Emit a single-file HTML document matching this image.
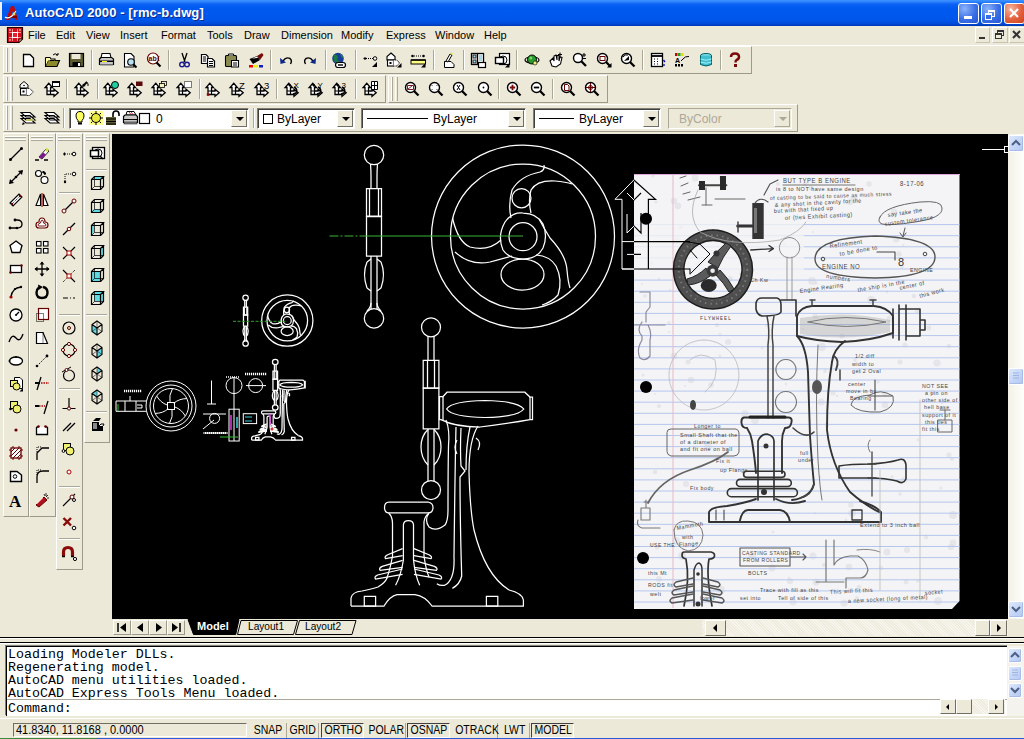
<!DOCTYPE html><html><head><meta charset="utf-8"><style>
*{margin:0;padding:0;box-sizing:border-box}
html,body{width:1024px;height:739px;overflow:hidden;background:#ece9d8;font-family:"Liberation Sans",sans-serif;font-size:11px;color:#000;position:relative}
.a{position:absolute}
svg{position:absolute;overflow:visible}
#title{left:0;top:0;width:1024px;height:26px;background:linear-gradient(#3d95ff 0,#2a80fa 2px,#0c62f4 4px,#005af0 8px,#0058ee 16px,#0054e8 21px,#0048d4 24px,#0038b0 26px)}
#title .t{left:25px;top:5px;color:#fff;font-weight:bold;font-size:13px;letter-spacing:0.1px;text-shadow:1px 1px #0b2a8a}
.wb{top:3px;width:21px;height:21px;border:1px solid #fff;border-radius:3px;background:radial-gradient(circle at 30% 25%,#8cb4fa,#3a6ee6 55%,#2456d0)}
.wbx{background:radial-gradient(circle at 30% 25%,#f5b4a0,#e4603c 55%,#cc4420)}
#menu{left:0;top:26px;width:1024px;height:20px;background:#ece9d8}
#menu span{position:absolute;top:3px}
.tb{position:absolute;background:#ece9d8;border-top:1px solid #fff;border-left:1px solid #fff;border-right:1px solid #9d9a8c;border-bottom:1px solid #9d9a8c}
.gv{position:absolute;top:2px;bottom:2px;width:2px;border-left:1px solid #fff;border-right:1px solid #aca899}
.gh{position:absolute;left:2px;right:2px;height:2px;border-top:1px solid #fff;border-bottom:1px solid #aca899}
.sv{position:absolute;width:2px;border-left:1px solid #aca899;border-right:1px solid #fff}
.sh{position:absolute;height:2px;border-top:1px solid #aca899;border-bottom:1px solid #fff}
.combo{position:absolute;background:#fff;border-top:1px solid #7f7d72;border-left:1px solid #7f7d72;border-bottom:1px solid #fff;border-right:1px solid #fff;box-shadow:inset 1px 1px 0 #404040}
.dd{position:absolute;top:1px;right:1px;width:16px;height:17px;background:#ece9d8;border-top:1px solid #fff;border-left:1px solid #fff;border-right:1px solid #716f64;border-bottom:1px solid #716f64}
.dd:after{content:"";position:absolute;left:4px;top:6px;border-left:4px solid transparent;border-right:4px solid transparent;border-top:4px solid #000}
.ct{position:absolute;top:3px;font-size:12px}
.dis:after{border-top-color:#aca899!important}
#cmd{font-family:"Liberation Mono",monospace;font-size:13.3px;line-height:13px}
.sb{position:absolute;top:724px;height:14px;font-size:12px;line-height:13px;padding-left:3px}
.sk{border:1px solid;border-color:#716f64 #fff #fff #716f64}
</style></head><body>
<div id="title" class="a"><div class="a t">AutoCAD 2000 - [rmc-b.dwg]</div><div class="a wb" style="left:958px"></div><div class="a wb" style="left:981px"></div><div class="a wb wbx" style="left:1004px"></div></div>
<svg style="left:4px;top:5px" width="16" height="16" viewBox="0 0 16 16"><path d="M2 15 L7 1 L10 1 L14 15 L11 15 L8.5 6 L6 15Z" fill="#c00a0a"/><path d="M4 11 L13 11 L13 13 L4 13Z" fill="#7a0000"/><path d="M1 12 Q4 14 8 11 L12 6" stroke="#fff" stroke-width="1.2" fill="none"/><circle cx="10" cy="9" r="1.4" fill="#ffd040"/></svg><div class="a" style="left:964px;top:16px;width:8px;height:3px;background:#fff"></div><div class="a" style="left:988px;top:10px;width:7px;height:7px;border:1px solid #fff;border-top-width:2px"></div><div class="a" style="left:985px;top:13px;width:7px;height:7px;border:1px solid #fff;border-top-width:2px;background:#3a6ee6"></div><svg style="left:1006px;top:5px" width="16" height="16" viewBox="0 0 16 16"><path d="M4 4 L12 12 M12 4 L4 12" stroke="#fff" stroke-width="2.2"/></svg>
<div class="a" style="left:0;top:2px;width:2px;height:18px;background:#f0f0f0"></div>
<div id="menu" class="a"><span style="left:28px">File</span><span style="left:56px">Edit</span><span style="left:86px">View</span><span style="left:120px">Insert</span><span style="left:161px">Format</span><span style="left:207px">Tools</span><span style="left:244px">Draw</span><span style="left:281px">Dimension</span><span style="left:341px">Modify</span><span style="left:386px">Express</span><span style="left:435px">Window</span><span style="left:484px">Help</span></div>
<div class="a" style="left:0;top:45px;width:1024px;height:1px;background:#fff"></div>
<svg style="left:7px;top:27px" width="16" height="16" viewBox="0 0 16 16"><path d="M0.5 0.5 H15.5 V12 L12 15.5 H0.5Z" fill="#d0101a" stroke="#200" stroke-width="1.2"/><path d="M2 5.5 H14 M2 10.5 H14 M5.5 2 V14 M10.5 2 V14" stroke="#ff9090" stroke-width="1"/><rect x="5.5" y="5.5" width="5" height="5" fill="#e82030" stroke="#fff" stroke-width="1"/><circle cx="3" cy="3" r="0.8" fill="#fff"/><circle cx="13" cy="3" r="0.8" fill="#fff"/><circle cx="3" cy="13" r="0.8" fill="#fff"/><path d="M12 15.5 L15.5 12 H12Z" fill="#ccc" stroke="#200" stroke-width="0.8"/></svg><div class="a" style="left:975px;top:27px;width:15px;height:16px;border:1px solid;border-color:#fff #c8c4b4 #c8c4b4 #fff"></div><div class="a" style="left:992px;top:27px;width:16px;height:16px;border:1px solid;border-color:#fff #c8c4b4 #c8c4b4 #fff"></div><div class="a" style="left:1009px;top:27px;width:16px;height:16px;border:1px solid;border-color:#fff #c8c4b4 #c8c4b4 #fff"></div><div class="a" style="left:979px;top:37px;width:6px;height:2px;background:#333"></div><div class="a" style="left:997px;top:30px;width:7px;height:6px;border:1px solid #333;border-top-width:2px"></div><div class="a" style="left:995px;top:33px;width:7px;height:6px;border:1px solid #333;border-top-width:2px;background:#ece9d8"></div><svg style="left:1009px;top:27px" width="16" height="16" viewBox="0 0 16 16"><path d="M4 4 L11 11 M11 4 L4 11" stroke="#333" stroke-width="2"/></svg>
<div class="tb" style="left:3px;top:46px;width:749px;height:28px"></div>
<div class="a" style="left:6px;top:48px;width:2px;height:24px;border-left:1px solid #fff;border-right:1px solid #aca899"></div><div class="a" style="left:10px;top:48px;width:3px;height:24px;border-left:1px solid #fff;border-right:1px solid #aca899"></div>
<div class="sv" style="left:91px;top:50px;height:20px"></div>
<div class="sv" style="left:168px;top:50px;height:20px"></div>
<div class="sv" style="left:270px;top:50px;height:20px"></div>
<div class="sv" style="left:325px;top:50px;height:20px"></div>
<div class="sv" style="left:355px;top:50px;height:20px"></div>
<div class="sv" style="left:433px;top:50px;height:20px"></div>
<div class="sv" style="left:463px;top:50px;height:20px"></div>
<div class="sv" style="left:516px;top:50px;height:20px"></div>
<div class="sv" style="left:642px;top:50px;height:20px"></div>
<div class="sv" style="left:720px;top:50px;height:20px"></div>
<div class="tb" style="left:3px;top:75px;width:383px;height:28px"></div>
<div class="a" style="left:6px;top:77px;width:2px;height:24px;border-left:1px solid #fff;border-right:1px solid #aca899"></div><div class="a" style="left:10px;top:77px;width:3px;height:24px;border-left:1px solid #fff;border-right:1px solid #aca899"></div>
<div class="sv" style="left:66px;top:79px;height:20px"></div>
<div class="sv" style="left:97px;top:79px;height:20px"></div>
<div class="sv" style="left:199px;top:79px;height:20px"></div>
<div class="sv" style="left:276px;top:79px;height:20px"></div>
<div class="sv" style="left:355px;top:79px;height:20px"></div>
<div class="tb" style="left:388px;top:75px;width:220px;height:28px"></div>
<div class="a" style="left:391px;top:77px;width:2px;height:24px;border-left:1px solid #fff;border-right:1px solid #aca899"></div><div class="a" style="left:395px;top:77px;width:3px;height:24px;border-left:1px solid #fff;border-right:1px solid #aca899"></div>
<div class="sv" style="left:498px;top:79px;height:20px"></div>
<div class="sv" style="left:552px;top:79px;height:20px"></div>
<div class="tb" style="left:3px;top:104px;width:795px;height:28px"></div>
<div class="a" style="left:6px;top:106px;width:2px;height:24px;border-left:1px solid #fff;border-right:1px solid #aca899"></div><div class="a" style="left:10px;top:106px;width:3px;height:24px;border-left:1px solid #fff;border-right:1px solid #aca899"></div>
<div class="sv" style="left:63px;top:108px;height:20px"></div>
<div class="sv" style="left:253px;top:108px;height:20px"></div>
<div class="combo" style="left:69px;top:108px;width:180px;height:21px;background:#fff"><span class="ct" style="left:86px">0</span><div class="dd"></div></div>
<div class="combo" style="left:257px;top:108px;width:98px;height:21px;background:#fff"><div class="a" style="left:5px;top:5px;width:10px;height:10px;border:1px solid #000"></div><span class="ct" style="left:19px">ByLayer</span><div class="dd"></div></div>
<div class="combo" style="left:361px;top:108px;width:165px;height:21px;background:#fff"><div class="a" style="left:5px;top:9px;width:61px;height:1px;background:#000"></div><span class="ct" style="left:71px">ByLayer</span><div class="dd"></div></div>
<div class="combo" style="left:533px;top:108px;width:128px;height:21px;background:#fff"><div class="a" style="left:5px;top:9px;width:35px;height:1px;background:#000"></div><span class="ct" style="left:45px">ByLayer</span><div class="dd"></div></div>
<div class="combo" style="left:668px;top:108px;width:124px;height:21px;background:#ece9d8;box-shadow:none;border-color:#aca899 #fff #fff #aca899"><span class="ct" style="left:10px;color:#aca899">ByColor</span><div class="dd dis" style="border-color:#fff #aca899 #aca899 #fff"></div></div>
<style>.combo:last-of-type .dd:after{}</style>
<div class="tb" style="left:3px;top:133px;width:26px;height:384px"></div>
<div class="gh" style="left:5px;top:136px;width:21px"></div><div class="gh" style="left:5px;top:139px;width:21px"></div>
<div class="tb" style="left:29px;top:133px;width:27px;height:384px"></div>
<div class="gh" style="left:31px;top:136px;width:22px"></div><div class="gh" style="left:31px;top:139px;width:22px"></div>
<div class="tb" style="left:56px;top:133px;width:27px;height:437px"></div>
<div class="gh" style="left:58px;top:136px;width:22px"></div><div class="gh" style="left:58px;top:139px;width:22px"></div>
<div class="tb" style="left:84px;top:133px;width:26px;height:310px"></div>
<div class="gh" style="left:86px;top:136px;width:21px"></div><div class="gh" style="left:86px;top:139px;width:21px"></div>
<svg style="left:20px;top:52px" width="16" height="16" viewBox="0 0 16 16"><path d="M3.5 2.5 H10 L13.5 6 V14.5 H3.5Z" fill="#fff" stroke="#000" stroke-width="1.3"/></svg><svg style="left:44px;top:52px" width="16" height="16" viewBox="0 0 16 16"><path d="M1.5 5.5 V14.5 H13 L15.5 8.5 H4 L1.5 14" fill="#8c8a2c" stroke="#000" stroke-width="1.1"/><path d="M1.5 5.5 H6 L7 7 H11 V8.5" fill="#f0f090" stroke="#000" stroke-width="1.1"/><path d="M2 6 H6 V8.5 H4 L2 13Z" fill="#ffffa0"/><path d="M9 3 Q11 0.5 13.5 3 M12 3 H14 V1" stroke="#000" stroke-width="1" fill="none"/></svg><svg style="left:68px;top:52px" width="16" height="16" viewBox="0 0 16 16"><rect x="1.5" y="1.5" width="14" height="13" fill="#5e5c30" stroke="#000" stroke-width="1.2"/><rect x="3.5" y="2" width="9" height="5" fill="#ece9d8"/><rect x="4.5" y="10" width="8" height="4.5" fill="#000"/><rect x="10" y="11" width="2" height="3" fill="#fff"/></svg><svg style="left:98px;top:52px" width="16" height="16" viewBox="0 0 16 16"><path d="M4 1.5 H12 L13 6 H3Z" fill="#fff" stroke="#000" stroke-width="1.1"/><path d="M1.5 7 L3 5.5 H13.5 L15.5 7 V12.5 H1.5Z" fill="#c8c8c8" stroke="#000" stroke-width="1.2"/><rect x="2" y="8.5" width="13" height="1.5" fill="#000"/><rect x="4" y="9" width="5" height="1" fill="#ff0"/><rect x="2" y="12" width="13" height="1.5" fill="#707070"/></svg><svg style="left:122px;top:52px" width="16" height="16" viewBox="0 0 16 16"><path d="M2.5 1.5 H9 L12 4.5 V15 H2.5Z" fill="#fff" stroke="#000" stroke-width="1.1"/><circle cx="9" cy="10" r="3.3" fill="#b8e0f0" stroke="#000" stroke-width="1.1"/><path d="M11.3 12.3 L14.5 15.5" stroke="#000" stroke-width="2"/></svg><svg style="left:146px;top:52px" width="16" height="16" viewBox="0 0 16 16"><circle cx="7" cy="6.5" r="5.5" fill="#fff" stroke="#600" stroke-width="1.2"/><text x="2.5" y="9" font-size="7" font-weight="bold" fill="#600" font-family="Liberation Sans">ab</text><path d="M13 4 Q11 6.5 13 9" stroke="#600" fill="none"/><path d="M10.5 10.5 L14.5 14.5" stroke="#000" stroke-width="2.2"/></svg><svg style="left:176px;top:52px" width="16" height="16" viewBox="0 0 16 16"><path d="M6 1 L9 10 M11 1 L8 10" stroke="#000" stroke-width="1.3"/><circle cx="6" cy="12.5" r="2.3" fill="none" stroke="#1b1b8c" stroke-width="1.4"/><circle cx="11" cy="12.5" r="2.3" fill="none" stroke="#1b1b8c" stroke-width="1.4"/></svg><svg style="left:200px;top:52px" width="16" height="16" viewBox="0 0 16 16"><path d="M1.5 2.5 H6 L8 4.5 V11.5 H1.5Z" fill="#fff" stroke="#000" stroke-width="1.2"/><path d="M3 5 H6 M3 7 H6 M3 9 H6" stroke="#000"/><path d="M7.5 6.5 H12 L14.5 9 V15 H7.5Z" fill="#fff" stroke="#000" stroke-width="1.2"/><path d="M9 9.5 H13 M9 11.5 H13 M9 13.5 H13" stroke="#000"/></svg><svg style="left:224px;top:52px" width="16" height="16" viewBox="0 0 16 16"><rect x="1.5" y="3.5" width="11" height="11" rx="1" fill="#8a8a50" stroke="#000" stroke-width="1.1"/><path d="M4.5 3.5 V2 H9.5 V3.5" fill="#fff" stroke="#000"/><path d="M7.5 8.5 H14.5 V15 H7.5Z" fill="#fff" stroke="#000" stroke-width="1.1"/><path d="M9 11 H13 M9 13 H13" stroke="#000"/></svg><svg style="left:248px;top:52px" width="16" height="16" viewBox="0 0 16 16"><path d="M1.5 7 L9 4 L12 8 L5 12Z" fill="#000"/><path d="M4 6.5 L9 4.5 L10 6Z" fill="#fff"/><path d="M9 4 L14 1 L15.5 3 L12 8Z" fill="#7a0a0a"/><rect x="1" y="13" width="4" height="2.5" fill="#e00"/><rect x="6" y="13" width="4" height="2.5" fill="#ee0"/><rect x="11" y="13" width="4" height="2.5" fill="#1020c0"/></svg><svg style="left:278px;top:52px" width="16" height="16" viewBox="0 0 16 16"><path d="M5 9 Q8 4.5 12 6.5 Q14.5 8.5 12.5 12" stroke="#000" stroke-width="1.4" fill="none"/><path d="M2 6 L2.5 12 L8 10.5Z" fill="#0a2a8a"/></svg><svg style="left:302px;top:52px" width="16" height="16" viewBox="0 0 16 16"><path d="M11 9 Q8 4.5 4 6.5 Q1.5 8.5 3.5 12" stroke="#000" stroke-width="1.4" fill="none"/><path d="M14 6 L13.5 12 L8 10.5Z" fill="#0a2a8a"/></svg><svg style="left:331px;top:52px" width="16" height="16" viewBox="0 0 16 16"><circle cx="7" cy="6.5" r="5.8" fill="#1a3c9c"/><path d="M3 3 Q6 2 7 5 Q5 8 8 9 Q10 11 6 12 Q3 10 2.5 7Z" fill="#1c7c3c"/><path d="M9 2 Q12 3 12 6 Q10 5 9 2" fill="#2a8a4a"/><rect x="4.5" y="10.5" width="10" height="5" rx="2.5" fill="#fff" stroke="#000" stroke-width="1.2"/><rect x="7" y="12.3" width="5" height="1.4" fill="#000"/></svg><svg style="left:362px;top:52px" width="16" height="16" viewBox="0 0 16 16"><path d="M1.5 6.5 H5" stroke="#000" stroke-width="1.2"/><path d="M3 5 V8" stroke="#000"/><path d="M6 6.5 H11" stroke="#000" stroke-dasharray="1 1"/><circle cx="13" cy="6.5" r="1.8" fill="#fff" stroke="#000"/><path d="M15 10 V15 H10Z" fill="#000"/></svg><svg style="left:386px;top:52px" width="16" height="16" viewBox="0 0 16 16"><path d="M5 1 L9 4.5 V8 H1 V4.5Z" fill="#fff" stroke="#000" stroke-width="1.1"/><rect x="1.5" y="8" width="6" height="6" fill="#fff" stroke="#000" stroke-width="1.1"/><rect x="3.5" y="10" width="2" height="2" fill="#000"/><path d="M7.5 8 L11 8 L13.5 11 L11 14 L7.5 14" fill="#fff" stroke="#000" stroke-width="1" stroke-dasharray="1 0.6"/><path d="M15.5 11 V15.5 H11Z" fill="#000"/></svg><svg style="left:410px;top:52px" width="16" height="16" viewBox="0 0 16 16"><circle cx="2.5" cy="4" r="1.3" fill="#000"/><circle cx="13.5" cy="4" r="1.3" fill="#000"/><path d="M4 4 H12" stroke="#000" stroke-dasharray="1 1"/><rect x="1" y="8" width="14.5" height="4" fill="#ffff80" stroke="#000" stroke-width="1"/><path d="M1 8 H15.5" stroke="#000" stroke-width="1.5"/><path d="M15.5 11 V15.5 H11Z" fill="#000"/></svg><svg style="left:441px;top:52px" width="16" height="16" viewBox="0 0 16 16"><path d="M3.5 9.5 H10 L13 12.5 V15.5 H3.5Z" fill="#fff" stroke="#000"/><path d="M5 9 L9 2 L11 3 L7 10Z" fill="#fff" stroke="#000" stroke-width="1"/><path d="M9 2 L10.5 0.5 L12 1.5 L11 3Z" fill="#e0e040"/></svg><svg style="left:470px;top:52px" width="16" height="16" viewBox="0 0 16 16"><rect x="1.5" y="1.5" width="12" height="11" fill="#fff" stroke="#000" stroke-width="1.3"/><path d="M7.5 1.5 V12.5" stroke="#000" stroke-width="1.3"/><rect x="3" y="3" width="3" height="3" fill="#a0d8e8" stroke="#000" stroke-width="0.8"/><rect x="3" y="8" width="3" height="3" fill="#a0d8e8" stroke="#000" stroke-width="0.8"/><rect x="9" y="3" width="3" height="6" fill="#a0d8e8"/><rect x="8.5" y="10.5" width="7" height="5" fill="#fff" stroke="#000" stroke-width="1.2"/></svg><svg style="left:494px;top:52px" width="16" height="16" viewBox="0 0 16 16"><rect x="5.5" y="1.5" width="10" height="11" fill="#fff" stroke="#000" stroke-width="1.2"/><circle cx="9" cy="8" r="4" fill="#fff" stroke="#000"/><rect x="1.5" y="5.5" width="8" height="6" fill="#fff" stroke="#000" stroke-width="1.4"/><path d="M15.5 11 V15.5 H11Z" fill="#000"/></svg><svg style="left:524px;top:52px" width="16" height="16" viewBox="0 0 16 16"><ellipse cx="8" cy="8" rx="7" ry="3" fill="none" stroke="#000" stroke-width="1.2"/><circle cx="8" cy="7.5" r="4.5" fill="#2a9a2a" stroke="#000"/><circle cx="6.8" cy="6" r="1.5" fill="#6ad86a"/><circle cx="11" cy="11" r="2" fill="#f0f080" stroke="#000" stroke-width="0.6"/></svg><svg style="left:548px;top:52px" width="16" height="16" viewBox="0 0 16 16"><path d="M2 9 L5 6 L6 9 L6 4 L8 3 L9 8 L9 3.5 L11 3.5 L11 9 L12 5 L14 5.5 L12.5 12 L8 15 L4 14 Z" fill="#fff" stroke="#000" stroke-width="1.1"/><path d="M12 0.5 V5 M10 2.5 H14" stroke="#000"/></svg><svg style="left:572px;top:52px" width="16" height="16" viewBox="0 0 16 16"><circle cx="6" cy="6" r="4.5" fill="#fff" stroke="#000" stroke-width="1.4"/><path d="M9.3 9.3 L14 14" stroke="#000" stroke-width="2.3"/><path d="M12 1 V5 M10 3 H14 M10 6.5 H14" stroke="#000"/></svg><svg style="left:596px;top:52px" width="16" height="16" viewBox="0 0 16 16"><circle cx="6.5" cy="6.5" r="5" fill="#fff" stroke="#000" stroke-width="1.4"/><path d="M10 10 L14.5 14.5" stroke="#000" stroke-width="2.3"/><rect x="4" y="4.5" width="5" height="4" fill="none" stroke="#600"/><path d="M15.5 11 V15.5 H11Z" fill="#000"/></svg><svg style="left:620px;top:52px" width="16" height="16" viewBox="0 0 16 16"><circle cx="6.5" cy="6.5" r="5" fill="#fff" stroke="#000" stroke-width="1.4"/><path d="M10 10 L14.5 14.5" stroke="#000" stroke-width="2.3"/><path d="M4 9 L9 4 L9 8Z" fill="#000"/><path d="M3 5 Q5 2 8 3" stroke="#000" fill="none"/></svg><svg style="left:650px;top:52px" width="16" height="16" viewBox="0 0 16 16"><rect x="1.5" y="1.5" width="11" height="13" fill="#fff" stroke="#000" stroke-width="1.3"/><path d="M1.5 4 H12.5" stroke="#000" stroke-width="1.8"/><path d="M4 7 H5 M7 7 H8 M4 9.5 H5 M7 9.5 H8 M4 12 H5 M7 12 H8" stroke="#000" stroke-width="1.2"/><path d="M13.5 8 L15 10 M14 12 V14" stroke="#1010c0" stroke-width="1.3"/></svg><svg style="left:674px;top:52px" width="16" height="16" viewBox="0 0 16 16"><rect x="1" y="1" width="2.5" height="3" fill="#c00"/><rect x="4" y="1" width="2.5" height="3" fill="#20a020"/><rect x="7" y="1" width="2.5" height="3" fill="#e0e000"/><path d="M9 7 Q11 4 15 4.5" stroke="#000" fill="none"/><path d="M7 9 L9 7" stroke="#000"/><text x="1" y="11" font-size="7" font-weight="bold" font-family="Liberation Sans">A</text><rect x="1" y="12" width="2" height="2.5" fill="#000"/><rect x="4" y="12" width="2" height="2.5" fill="#000"/><rect x="7" y="12" width="2" height="2.5" fill="#000"/></svg><svg style="left:698px;top:52px" width="16" height="16" viewBox="0 0 16 16"><ellipse cx="8" cy="3.5" rx="5.5" ry="2" fill="#80e0e8" stroke="#006060"/><path d="M2.5 3.5 V12.5 Q8 15.5 13.5 12.5 V3.5" fill="#40c0d0" stroke="#006060"/><path d="M2.5 7 Q8 9.5 13.5 7 M2.5 10 Q8 12.5 13.5 10" stroke="#a0f0f8" fill="none"/></svg><svg style="left:727px;top:52px" width="16" height="16" viewBox="0 0 16 16"><path d="M4 5 Q4 1.5 8 1.5 Q12 1.5 12 5 Q12 7 9.5 8 Q8.5 8.5 8.5 10.5" stroke="#7a0a0a" stroke-width="2.5" fill="none"/><rect x="7" y="12" width="3" height="3" fill="#7a0a0a"/></svg><svg style="left:19px;top:81px" width="16" height="16" viewBox="0 0 16 16"><path d="M5 0.5 L9 4 V7 H1 V4Z" fill="#fff" stroke="#000"/><circle cx="5" cy="4.5" r="0.8" fill="#000"/><rect x="1.5" y="7.5" width="6" height="6.5" fill="#fff" stroke="#000" stroke-width="1.1"/><rect x="3.5" y="9.5" width="2" height="2" fill="#000"/><path d="M7.5 7.5 H10.5 L14.5 11 L10.5 14.5 H7.5" fill="#fff" stroke="#000" stroke-dasharray="1 0.7"/></svg><svg style="left:44px;top:81px" width="16" height="16" viewBox="0 0 16 16"><path d="M4.75 2.3 L8.4 6.5 H6.5 V10 H10 V8.2 L14.2 11.75 L10 15.3 V13.5 H3 V6.5 H1.1 Z" fill="#fff" stroke="#000" stroke-width="1.3" stroke-linejoin="miter"/><path d="M3 10 H6.5 V13.5" stroke="#000" stroke-width="1.2" fill="none"/><rect x="8.5" y="0.5" width="7" height="5" fill="#fff" stroke="#000"/><rect x="8.5" y="0.5" width="7" height="1.5" fill="#000"/></svg><svg style="left:74px;top:81px" width="16" height="16" viewBox="0 0 16 16"><path d="M4.75 2.3 L8.4 6.5 H6.5 V10 H10 V8.2 L14.2 11.75 L10 15.3 V13.5 H3 V6.5 H1.1 Z" fill="#fff" stroke="#000" stroke-width="1.3" stroke-linejoin="miter"/><path d="M3 10 H6.5 V13.5" stroke="#000" stroke-width="1.2" fill="none"/><path d="M9 5 L13 1" stroke="#000" stroke-width="2"/><path d="M8 6 L9 2.5 L11.5 5Z" fill="#000"/><path d="M12 1 Q15 2 14 5" stroke="#000" fill="none"/></svg><svg style="left:103px;top:81px" width="16" height="16" viewBox="0 0 16 16"><path d="M4.75 2.3 L8.4 6.5 H6.5 V10 H10 V8.2 L14.2 11.75 L10 15.3 V13.5 H3 V6.5 H1.1 Z" fill="#fff" stroke="#000" stroke-width="1.3" stroke-linejoin="miter"/><path d="M3 10 H6.5 V13.5" stroke="#000" stroke-width="1.2" fill="none"/><circle cx="12" cy="4" r="3.5" fill="#20d0a0" stroke="#000"/></svg><svg style="left:127px;top:81px" width="16" height="16" viewBox="0 0 16 16"><path d="M4.75 2.3 L8.4 6.5 H6.5 V10 H10 V8.2 L14.2 11.75 L10 15.3 V13.5 H3 V6.5 H1.1 Z" fill="#fff" stroke="#000" stroke-width="1.3" stroke-linejoin="miter"/><path d="M3 10 H6.5 V13.5" stroke="#000" stroke-width="1.2" fill="none"/><rect x="9" y="0.5" width="6.5" height="4.5" fill="#5a0a0a"/></svg><svg style="left:151px;top:81px" width="16" height="16" viewBox="0 0 16 16"><path d="M4.75 2.3 L8.4 6.5 H6.5 V10 H10 V8.2 L14.2 11.75 L10 15.3 V13.5 H3 V6.5 H1.1 Z" fill="#fff" stroke="#000" stroke-width="1.3" stroke-linejoin="miter"/><path d="M3 10 H6.5 V13.5" stroke="#000" stroke-width="1.2" fill="none"/><rect x="10.5" y="0.5" width="5" height="4" fill="#f0f0c0" stroke="#000" stroke-width="0.8"/><rect x="8.5" y="2.5" width="5" height="4" fill="#f0f0c0" stroke="#000" stroke-width="0.8"/></svg><svg style="left:176px;top:81px" width="16" height="16" viewBox="0 0 16 16"><path d="M4.75 2.3 L8.4 6.5 H6.5 V10 H10 V8.2 L14.2 11.75 L10 15.3 V13.5 H3 V6.5 H1.1 Z" fill="#fff" stroke="#000" stroke-width="1.3" stroke-linejoin="miter"/><path d="M3 10 H6.5 V13.5" stroke="#000" stroke-width="1.2" fill="none"/><rect x="8.5" y="0.5" width="7" height="6" fill="#fff" stroke="#000" stroke-dasharray="1 1"/></svg><svg style="left:205px;top:81px" width="16" height="16" viewBox="0 0 16 16"><path d="M4.75 2.3 L8.4 6.5 H6.5 V10 H10 V8.2 L14.2 11.75 L10 15.3 V13.5 H3 V6.5 H1.1 Z" fill="#fff" stroke="#000" stroke-width="1.3" stroke-linejoin="miter"/><path d="M3 10 H6.5 V13.5" stroke="#000" stroke-width="1.2" fill="none"/><rect x="1.8" y="12.2" width="2.6" height="2.6" fill="#8a0a0a"/></svg><svg style="left:229px;top:81px" width="16" height="16" viewBox="0 0 16 16"><path d="M4.75 2.3 L8.4 6.5 H6.5 V10 H10 V8.2 L14.2 11.75 L10 15.3 V13.5 H3 V6.5 H1.1 Z" fill="#fff" stroke="#000" stroke-width="1.3" stroke-linejoin="miter"/><path d="M3 10 H6.5 V13.5" stroke="#000" stroke-width="1.2" fill="none"/><text x="10" y="8" font-size="9.5" font-family="Liberation Sans">Z</text></svg><svg style="left:254px;top:81px" width="16" height="16" viewBox="0 0 16 16"><path d="M4.75 2.3 L8.4 6.5 H6.5 V10 H10 V8.2 L14.2 11.75 L10 15.3 V13.5 H3 V6.5 H1.1 Z" fill="#fff" stroke="#000" stroke-width="1.3" stroke-linejoin="miter"/><path d="M3 10 H6.5 V13.5" stroke="#000" stroke-width="1.2" fill="none"/><text x="10" y="8" font-size="9.5" font-family="Liberation Sans">3</text></svg><svg style="left:284px;top:81px" width="16" height="16" viewBox="0 0 16 16"><path d="M4.75 2.3 L8.4 6.5 H6.5 V10 H10 V8.2 L14.2 11.75 L10 15.3 V13.5 H3 V6.5 H1.1 Z" fill="#fff" stroke="#000" stroke-width="1.3" stroke-linejoin="miter"/><path d="M3 10 H6.5 V13.5" stroke="#000" stroke-width="1.2" fill="none"/><path d="M3 3 L6.5 3 L6.5 6.5Z" fill="#000"/><path d="M10 6 Q14 8 12 12 L9 13" stroke="#000" stroke-width="1.6" fill="none"/><text x="9.5" y="7" font-size="8" font-family="Liberation Sans">X</text></svg><svg style="left:308px;top:81px" width="16" height="16" viewBox="0 0 16 16"><path d="M4.75 2.3 L8.4 6.5 H6.5 V10 H10 V8.2 L14.2 11.75 L10 15.3 V13.5 H3 V6.5 H1.1 Z" fill="#fff" stroke="#000" stroke-width="1.3" stroke-linejoin="miter"/><path d="M3 10 H6.5 V13.5" stroke="#000" stroke-width="1.2" fill="none"/><path d="M3 3 L6.5 3 L6.5 6.5Z" fill="#000"/><path d="M10 6 Q14 8 12 12 L9 13" stroke="#000" stroke-width="1.6" fill="none"/><text x="9.5" y="7" font-size="8" font-family="Liberation Sans">Y</text></svg><svg style="left:332px;top:81px" width="16" height="16" viewBox="0 0 16 16"><path d="M4.75 2.3 L8.4 6.5 H6.5 V10 H10 V8.2 L14.2 11.75 L10 15.3 V13.5 H3 V6.5 H1.1 Z" fill="#fff" stroke="#000" stroke-width="1.3" stroke-linejoin="miter"/><path d="M3 10 H6.5 V13.5" stroke="#000" stroke-width="1.2" fill="none"/><path d="M3 3 L6.5 3 L6.5 6.5Z" fill="#000"/><path d="M10 6 Q14 8 12 12 L9 13" stroke="#000" stroke-width="1.6" fill="none"/><text x="9.5" y="7" font-size="8" font-family="Liberation Sans">3</text></svg><svg style="left:362px;top:81px" width="16" height="16" viewBox="0 0 16 16"><path d="M4.75 2.3 L8.4 6.5 H6.5 V10 H10 V8.2 L14.2 11.75 L10 15.3 V13.5 H3 V6.5 H1.1 Z" fill="#fff" stroke="#000" stroke-width="1.3" stroke-linejoin="miter"/><path d="M3 10 H6.5 V13.5" stroke="#000" stroke-width="1.2" fill="none"/><path d="M9.5 0.5 H15.5 V8.5 H9.5Z M9.5 4.5 H15.5 M12.5 0.5 V8.5" fill="#fff" stroke="#000"/></svg><svg style="left:404px;top:81px" width="16" height="16" viewBox="0 0 16 16"><circle cx="6.5" cy="6.5" r="5" fill="#fff" stroke="#000" stroke-width="1.4"/><path d="M10 10 L14.5 14.5" stroke="#000" stroke-width="2.3"/><path d="M3.5 8.5 V4.5 H9.5 V8.5 Z" fill="none" stroke="#600" stroke-width="0.9"/><path d="M4 8 L8 5" stroke="#600" stroke-width="0.8"/></svg><svg style="left:428px;top:81px" width="16" height="16" viewBox="0 0 16 16"><circle cx="6.5" cy="6.5" r="5" fill="#fff" stroke="#000" stroke-width="1.4"/><path d="M10 10 L14.5 14.5" stroke="#000" stroke-width="2.3"/><path d="M4.5 4 L3.8 4.8 M8.5 4 L9.2 4.8 M3.8 8.2 L4.5 9 M9.2 8.2 L8.5 9" stroke="#000" stroke-width="0.9" fill="none"/></svg><svg style="left:452px;top:81px" width="16" height="16" viewBox="0 0 16 16"><circle cx="6.5" cy="6.5" r="5" fill="#fff" stroke="#000" stroke-width="1.4"/><path d="M10 10 L14.5 14.5" stroke="#000" stroke-width="2.3"/><path d="M5 4 L8 9 M8 4 L5 9" stroke="#000"/></svg><svg style="left:477px;top:81px" width="16" height="16" viewBox="0 0 16 16"><circle cx="6.5" cy="6.5" r="5" fill="#fff" stroke="#000" stroke-width="1.4"/><path d="M10 10 L14.5 14.5" stroke="#000" stroke-width="2.3"/><circle cx="6.5" cy="6.5" r="0.9" fill="#000"/></svg><svg style="left:506px;top:81px" width="16" height="16" viewBox="0 0 16 16"><circle cx="6.5" cy="6.5" r="5" fill="#fff" stroke="#000" stroke-width="1.4"/><path d="M10 10 L14.5 14.5" stroke="#000" stroke-width="2.3"/><path d="M3.8 6.5 H9.2 M6.5 3.8 V9.2" stroke="#7a0a0a" stroke-width="1.8"/></svg><svg style="left:530px;top:81px" width="16" height="16" viewBox="0 0 16 16"><circle cx="6.5" cy="6.5" r="5" fill="#fff" stroke="#000" stroke-width="1.4"/><path d="M10 10 L14.5 14.5" stroke="#000" stroke-width="2.3"/><path d="M3.8 6.5 H9.2" stroke="#000" stroke-width="1.8"/></svg><svg style="left:560px;top:81px" width="16" height="16" viewBox="0 0 16 16"><circle cx="6.5" cy="6.5" r="5" fill="#fff" stroke="#000" stroke-width="1.4"/><path d="M10 10 L14.5 14.5" stroke="#000" stroke-width="2.3"/><path d="M4.5 3.5 H7.5 L9 5 V9.5 H4.5Z" fill="#fff" stroke="#600"/></svg><svg style="left:584px;top:81px" width="16" height="16" viewBox="0 0 16 16"><circle cx="6.5" cy="6.5" r="5" fill="#fff" stroke="#000" stroke-width="1.4"/><path d="M10 10 L14.5 14.5" stroke="#000" stroke-width="2.3"/><path d="M2 6.5 H11 M6.5 2 V11" stroke="#600"/><circle cx="6.5" cy="6.5" r="2" fill="none" stroke="#600"/></svg><svg style="left:20px;top:110px" width="16" height="16" viewBox="0 0 16 16"><path d="M1 2.5 H10 L15 7 H6Z M1 5.5 H10 L15 10 H6Z M1 8.5 H10 L15 13 H6Z" fill="#fff" stroke="#000" stroke-width="1.1"/><path d="M6 10 H14" stroke="#e0e060" stroke-width="1.5"/><path d="M2 15 L3 12 L5 14Z" fill="#000"/></svg><svg style="left:44px;top:110px" width="16" height="16" viewBox="0 0 16 16"><path d="M1 2.5 H10 L15 7 H6Z M1 5.5 H10 L15 10 H6Z M1 8.5 H10 L15 13 H6Z" fill="#fff" stroke="#000" stroke-width="1.1"/></svg><svg style="left:72px;top:110px" width="16" height="16" viewBox="0 0 16 16"><path d="M4 6 Q4 1.5 8 1.5 Q12 1.5 12 6 Q12 8.5 10 10.5 V12 H6 V10.5 Q4 8.5 4 6Z" fill="#ffff60" stroke="#000"/><rect x="6" y="12.5" width="4" height="2" fill="#000"/></svg><svg style="left:88px;top:110px" width="16" height="16" viewBox="0 0 16 16"><rect x="1" y="1" width="14" height="14" fill="#ffff90"/><circle cx="8" cy="8" r="4.5" fill="#e8e840" stroke="#000"/><path d="M8 1 V3 M8 13 V15 M1 8 H3 M13 8 H15 M3 3 L4.5 4.5 M13 3 L11.5 4.5 M3 13 L4.5 11.5 M13 13 L11.5 11.5" stroke="#000"/></svg><svg style="left:105px;top:110px" width="16" height="16" viewBox="0 0 16 16"><path d="M8 7 V4 Q8 1 11 1 Q14 1 14 4 V6" stroke="#000" stroke-width="1.6" fill="none"/><rect x="1" y="7" width="10" height="8" fill="#5e5c30"/><path d="M1 9 H11 M1 11.5 H11 M1 14 H11" stroke="#000" stroke-width="1"/></svg><svg style="left:122px;top:110px" width="16" height="16" viewBox="0 0 16 16"><path d="M5 1.5 H12 L14 5 H4Z" fill="#fff" stroke="#000"/><path d="M7 2 L9 4.5 M9 2 L11 4.5" stroke="#c00" stroke-width="0.8"/><path d="M1.5 6.5 L3 5 H14 L15.5 6.5 V12.5 H1.5Z" fill="#c8c8c8" stroke="#000" stroke-width="1.2"/><path d="M2 9.5 H15" stroke="#000"/><rect x="2" y="12" width="13" height="2" fill="#888" stroke="#000" stroke-width="0.5"/></svg><svg style="left:136px;top:110px" width="16" height="16" viewBox="0 0 16 16"><rect x="3.5" y="3.5" width="10" height="10" fill="#fff" stroke="#000" stroke-width="1.2"/></svg><svg style="left:8px;top:146px" width="16" height="16" viewBox="0 0 16 16"><path d="M2.5 13.5 L13.5 2.5" stroke="#000" stroke-width="1.2"/><circle cx="2.5" cy="13.5" r="1.5" fill="#000"/><circle cx="13.5" cy="2.5" r="1.5" fill="#000"/></svg><svg style="left:8px;top:169px" width="16" height="16" viewBox="0 0 16 16"><path d="M2 14 L14 2" stroke="#000" stroke-width="1.2"/><path d="M1 15 L2 10 L6 14Z M15 1 L14 6 L10 2Z" fill="#000"/><circle cx="8" cy="8" r="1.3" fill="#000"/></svg><svg style="left:8px;top:192px" width="16" height="16" viewBox="0 0 16 16"><path d="M2 11 L11 2 L14 5 L5 14Z" fill="#fff" stroke="#000" stroke-width="1.1"/><path d="M4 12 L12 4" stroke="#000" stroke-dasharray="1 1"/><circle cx="4" cy="12" r="1.2" fill="#600"/><circle cx="12" cy="4" r="1.2" fill="#600"/></svg><svg style="left:8px;top:216px" width="16" height="16" viewBox="0 0 16 16"><path d="M2 12 H9 Q14 12 14 8 Q14 4 9 4 H7" stroke="#000" stroke-width="1.3" fill="none"/><circle cx="2" cy="12" r="1.4" fill="#000"/><circle cx="9" cy="12" r="1.3" fill="#000"/><circle cx="7" cy="4" r="1.4" fill="#000"/></svg><svg style="left:8px;top:239px" width="16" height="16" viewBox="0 0 16 16"><path d="M8 2 L14 6.5 L12 13.5 H4 L2 6.5Z" fill="#fff" stroke="#000" stroke-width="1.3"/></svg><svg style="left:8px;top:261px" width="16" height="16" viewBox="0 0 16 16"><rect x="2.5" y="4.5" width="11" height="7" fill="#fff" stroke="#000" stroke-width="1.3"/><circle cx="2.5" cy="11.5" r="1.2" fill="#600"/><circle cx="13.5" cy="4.5" r="1.2" fill="#600"/></svg><svg style="left:8px;top:284px" width="16" height="16" viewBox="0 0 16 16"><path d="M3 13 Q4 4 13 3" stroke="#000" stroke-width="1.3" fill="none"/><circle cx="3" cy="13" r="1.6" fill="#a00000"/><circle cx="7" cy="5" r="1.1" fill="#000"/><circle cx="13" cy="3" r="1.2" fill="#000"/></svg><svg style="left:8px;top:307px" width="16" height="16" viewBox="0 0 16 16"><circle cx="8" cy="8" r="6" fill="#fff" stroke="#000" stroke-width="1.3"/><path d="M8 8 L11 5" stroke="#000" stroke-width="1.2"/><circle cx="8" cy="8" r="1" fill="#000"/></svg><svg style="left:8px;top:330px" width="16" height="16" viewBox="0 0 16 16"><path d="M1 12 Q4 3 8 8 Q12 13 15 4" stroke="#000" stroke-width="1.3" fill="none"/></svg><svg style="left:8px;top:353px" width="16" height="16" viewBox="0 0 16 16"><ellipse cx="8" cy="8" rx="6.5" ry="4" fill="#fff" stroke="#000" stroke-width="1.3"/><circle cx="8" cy="4" r="1" fill="#000"/><circle cx="1.5" cy="8" r="1" fill="#000"/></svg><svg style="left:8px;top:376px" width="16" height="16" viewBox="0 0 16 16"><path d="M6.5 1.5 H12 L14.5 4 V12.5 H6.5Z" fill="#fff" stroke="#000"/><rect x="2.5" y="4.5" width="7" height="6" fill="#f0f070" stroke="#000"/><circle cx="8.5" cy="10.5" r="3.5" fill="#f0f070" stroke="#000"/><path d="M15 12 V15.5 H11.5Z" fill="#000"/></svg><svg style="left:8px;top:399px" width="16" height="16" viewBox="0 0 16 16"><rect x="2.5" y="2.5" width="7" height="7" fill="#f0f070" stroke="#000"/><circle cx="9" cy="10" r="4" fill="#f0f070" stroke="#000"/><circle cx="2.5" cy="10" r="1.3" fill="#000"/></svg><svg style="left:8px;top:422px" width="16" height="16" viewBox="0 0 16 16"><circle cx="8" cy="8" r="1.6" fill="#600"/></svg><svg style="left:8px;top:445px" width="16" height="16" viewBox="0 0 16 16"><rect x="3" y="3" width="10" height="10" fill="#fff" stroke="#600" stroke-width="1.3"/><path d="M3 7 L7 3 M3 11 L11 3 M5 13 L13 5 M9 13 L13 9" stroke="#600"/><path d="M1 5 H3 M13 5 H15 M1 11 H3 M13 11 H15 M5 1 V3 M11 1 V3 M5 13 V15 M11 13 V15" stroke="#600"/></svg><svg style="left:8px;top:468px" width="16" height="16" viewBox="0 0 16 16"><path d="M2.5 3.5 H9 L13.5 7 V13.5 H2.5Z" fill="#fff" stroke="#000" stroke-width="1.4"/><circle cx="7" cy="8.5" r="1.8" fill="none" stroke="#000"/></svg><svg style="left:8px;top:492px" width="16" height="16" viewBox="0 0 16 16"><text x="1" y="14.5" font-size="17" font-weight="bold" font-family="Liberation Serif">A</text></svg><svg style="left:34px;top:146px" width="16" height="16" viewBox="0 0 16 16"><path d="M5 11 L12 3 L15 5 L8 13Z" fill="#fff" stroke="#000" stroke-width="0.8"/><path d="M5 11 L9 6.5 L12 8.5 L8 13Z" fill="#7a1a8a"/><path d="M11 4 L13 2 L15 3.5 L13 6Z" fill="#d0e040"/><path d="M1 14 H5 M10 14 H14" stroke="#000" stroke-width="1.3"/></svg><svg style="left:34px;top:169px" width="16" height="16" viewBox="0 0 16 16"><circle cx="4.5" cy="4.5" r="3" fill="#fff" stroke="#000" stroke-width="1.1"/><circle cx="10.5" cy="11" r="3.5" fill="#fff" stroke="#000" stroke-width="1.1"/><path d="M8 3 H11 V6 M9 2 L12 5" stroke="#000"/></svg><svg style="left:34px;top:192px" width="16" height="16" viewBox="0 0 16 16"><path d="M6.5 2 L2 13.5 H6.5Z M9.5 2 L14 13.5 H9.5Z" fill="#fff" stroke="#000" stroke-width="1.1"/><path d="M8 1 V15" stroke="#a00" stroke-width="1.2"/></svg><svg style="left:34px;top:216px" width="16" height="16" viewBox="0 0 16 16"><path d="M5 6 Q5 2 8 2 Q11 2 11 6 Q14 6 14 9 Q14 12 11 12 H5 Q2 12 2 9 Q2 6 5 6Z" fill="#fff" stroke="#600" stroke-width="1.2"/><path d="M6.5 7 Q7 4 8 4 Q9.5 4 9.5 7 Q12 7.5 12 9 Q12 10 11 10 H5 Q4 10 4 9 Q4 7.5 6.5 7Z" fill="none" stroke="#600" stroke-width="0.9"/></svg><svg style="left:34px;top:239px" width="16" height="16" viewBox="0 0 16 16"><rect x="2.5" y="2.5" width="4.5" height="4.5" fill="#fff" stroke="#000" stroke-width="1.1"/><rect x="9.5" y="2.5" width="4.5" height="4.5" fill="#fff" stroke="#000" stroke-width="1.1"/><rect x="2.5" y="9.5" width="4.5" height="4.5" fill="#fff" stroke="#000" stroke-width="1.1"/><rect x="9.5" y="9.5" width="4.5" height="4.5" fill="#fff" stroke="#000" stroke-width="1.1"/></svg><svg style="left:34px;top:261px" width="16" height="16" viewBox="0 0 16 16"><path d="M8 1 V15 M1 8 H15" stroke="#000" stroke-width="1.3"/><path d="M8 0.5 L5.5 3.5 H10.5Z M8 15.5 L5.5 12.5 H10.5Z M0.5 8 L3.5 5.5 V10.5Z M15.5 8 L12.5 5.5 V10.5Z" fill="#000"/></svg><svg style="left:34px;top:284px" width="16" height="16" viewBox="0 0 16 16"><path d="M5 3.5 Q2.5 5.5 2.5 8.5 Q2.5 14 8 14 Q13.5 14 13.5 8.5 Q13.5 4 9 3" stroke="#000" stroke-width="2.4" fill="none"/><path d="M4 0.5 L9 3 L4.5 6Z" fill="#000"/></svg><svg style="left:34px;top:307px" width="16" height="16" viewBox="0 0 16 16"><rect x="4.5" y="1.5" width="10" height="11" fill="#fff" stroke="#600" stroke-width="1.2"/><path d="M2.5 14.5 V6.5 H9.5 V14.5Z" fill="none" stroke="#000" stroke-dasharray="1 1"/></svg><svg style="left:34px;top:330px" width="16" height="16" viewBox="0 0 16 16"><path d="M2.5 2.5 H9 L13.5 13.5 H2.5Z" fill="#fff" stroke="#000" stroke-width="1.2"/><path d="M9 2.5 V13.5" stroke="#000" stroke-dasharray="1 1"/></svg><svg style="left:34px;top:353px" width="16" height="16" viewBox="0 0 16 16"><path d="M3 13 L13 3" stroke="#000" stroke-dasharray="1.5 1.5"/><circle cx="3" cy="13" r="1.3" fill="#000"/><circle cx="13" cy="3" r="1.4" fill="#000"/></svg><svg style="left:34px;top:376px" width="16" height="16" viewBox="0 0 16 16"><path d="M7 1 L3 14" stroke="#000" stroke-width="1.3"/><path d="M1 7 H6" stroke="#000" stroke-width="2"/><path d="M7 7 H15" stroke="#a00" stroke-width="1.5" stroke-dasharray="1.5 1"/></svg><svg style="left:34px;top:399px" width="16" height="16" viewBox="0 0 16 16"><path d="M14 2 L10 15" stroke="#000" stroke-width="1.3"/><path d="M1 7 H5" stroke="#000" stroke-width="2"/><path d="M5 7 H11" stroke="#a00" stroke-width="1.5" stroke-dasharray="1.5 1"/></svg><svg style="left:34px;top:422px" width="16" height="16" viewBox="0 0 16 16"><path d="M2.5 5 V12.5 H13.5 V5" stroke="#000" stroke-width="1.3" fill="#fff"/><path d="M2.5 5 H4.5 M11.5 5 H13.5" stroke="#000" stroke-width="1.3"/><circle cx="4.5" cy="4.5" r="1.3" fill="#600"/><circle cx="11.5" cy="4.5" r="1.3" fill="#600"/></svg><svg style="left:34px;top:445px" width="16" height="16" viewBox="0 0 16 16"><path d="M3 15 V8 L8 3 H15" stroke="#000" stroke-width="1.3" fill="none"/><path d="M3 7 V2 H8" stroke="#000" stroke-dasharray="1 1" fill="none"/></svg><svg style="left:34px;top:468px" width="16" height="16" viewBox="0 0 16 16"><path d="M3 15 V9 Q3 3 9 3 H15" stroke="#000" stroke-width="1.3" fill="none"/><path d="M3 7 V2 H8" stroke="#000" stroke-dasharray="1 1" fill="none"/></svg><svg style="left:34px;top:492px" width="16" height="16" viewBox="0 0 16 16"><path d="M2 13 L10 5 L13 8 L5 15Z" fill="#b01020" stroke="#600"/><path d="M3 12 L9 6" stroke="#f08080"/><path d="M12 1 V4 M14 3 L12 5 M15 6 H13 M10 2 L11 4" stroke="#000" stroke-width="0.8"/></svg><svg style="left:61px;top:146px" width="16" height="16" viewBox="0 0 16 16"><path d="M2 8 H5 M3.5 6.5 V9.5" stroke="#000" stroke-width="1.2"/><path d="M6 8 H11" stroke="#000" stroke-dasharray="1 1"/><circle cx="13" cy="8" r="1.8" fill="#fff" stroke="#000"/></svg><svg style="left:61px;top:169px" width="16" height="16" viewBox="0 0 16 16"><path d="M4 12 V5 H11" stroke="#000" stroke-dasharray="1 1" fill="none"/><circle cx="13" cy="5" r="1.8" fill="#fff" stroke="#000"/><circle cx="4" cy="13" r="1.2" fill="#000"/></svg><svg style="left:61px;top:198px" width="16" height="16" viewBox="0 0 16 16"><path d="M3 13 L12 4" stroke="#000" stroke-width="1.2"/><circle cx="13" cy="3" r="2" fill="#fff" stroke="#600"/><circle cx="3" cy="13" r="2" fill="#fff" stroke="#600"/></svg><svg style="left:61px;top:221px" width="16" height="16" viewBox="0 0 16 16"><path d="M2 14 L14 2" stroke="#000" stroke-width="1.2"/><circle cx="8" cy="8" r="1.8" fill="#fff" stroke="#600"/></svg><svg style="left:61px;top:245px" width="16" height="16" viewBox="0 0 16 16"><path d="M2 2 L14 14 M14 2 L2 14" stroke="#000" stroke-width="1.1"/><rect x="6" y="6" width="4" height="4" fill="#fff" stroke="#a00"/></svg><svg style="left:61px;top:268px" width="16" height="16" viewBox="0 0 16 16"><path d="M2 2 L14 14" stroke="#000" stroke-width="1.1"/><path d="M14 2 L2 14" stroke="#000" stroke-dasharray="1 1"/><rect x="6" y="6" width="4" height="4" fill="#fff" stroke="#a00"/></svg><svg style="left:61px;top:290px" width="16" height="16" viewBox="0 0 16 16"><path d="M2 8 H7 M9 8 H10 M12 8 H14" stroke="#000" stroke-width="1.2"/></svg><svg style="left:61px;top:320px" width="16" height="16" viewBox="0 0 16 16"><circle cx="8" cy="8" r="6" fill="none" stroke="#000" stroke-width="1.2"/><circle cx="8" cy="8" r="1.5" fill="none" stroke="#600"/></svg><svg style="left:61px;top:342px" width="16" height="16" viewBox="0 0 16 16"><circle cx="8" cy="8" r="6" fill="none" stroke="#000" stroke-width="1.1"/><circle cx="8" cy="2" r="1.6" fill="#fff" stroke="#600"/><circle cx="8" cy="14" r="1.6" fill="#fff" stroke="#600"/><circle cx="2" cy="8" r="1.6" fill="#fff" stroke="#600"/><circle cx="14" cy="8" r="1.6" fill="#fff" stroke="#600"/></svg><svg style="left:61px;top:366px" width="16" height="16" viewBox="0 0 16 16"><circle cx="8" cy="9.5" r="5.5" fill="none" stroke="#000" stroke-width="1.2"/><path d="M1 6 L10 1" stroke="#000"/><circle cx="5.5" cy="4" r="1.5" fill="#fff" stroke="#600"/></svg><svg style="left:61px;top:396px" width="16" height="16" viewBox="0 0 16 16"><path d="M1.5 12.5 H14.5 M8 2 V12.5" stroke="#000" stroke-width="1.2"/><circle cx="8" cy="12.5" r="1.6" fill="#fff" stroke="#600"/></svg><svg style="left:61px;top:418px" width="16" height="16" viewBox="0 0 16 16"><path d="M2 13 L10 5 M6 13 L14 5" stroke="#000" stroke-width="1.2"/></svg><svg style="left:61px;top:441px" width="16" height="16" viewBox="0 0 16 16"><rect x="2.5" y="2.5" width="7" height="7" fill="#f0f070" stroke="#000"/><circle cx="9" cy="10" r="4" fill="#f0f070" stroke="#000"/><circle cx="2.5" cy="10" r="1.4" fill="#fff" stroke="#000"/></svg><svg style="left:61px;top:464px" width="16" height="16" viewBox="0 0 16 16"><circle cx="8" cy="8" r="2" fill="#fff" stroke="#a00"/></svg><svg style="left:61px;top:492px" width="16" height="16" viewBox="0 0 16 16"><path d="M2 14 L14 2" stroke="#000" stroke-width="1.1"/><circle cx="11" cy="5" r="2" fill="#fff" stroke="#600"/><circle cx="13" cy="8" r="1.5" fill="#fff" stroke="#000"/></svg><svg style="left:61px;top:515px" width="16" height="16" viewBox="0 0 16 16"><path d="M2.5 3 L10 10.5 M10 3 L2.5 10.5" stroke="#8a0a0a" stroke-width="2.4"/><circle cx="13" cy="13" r="1.8" fill="#fff" stroke="#000"/></svg><svg style="left:61px;top:545px" width="16" height="16" viewBox="0 0 16 16"><path d="M2.5 11 V7 Q2.5 2.5 7 2.5 Q11.5 2.5 11.5 7 V11" stroke="#8a0a0a" stroke-width="3.2" fill="none"/><path d="M1 11.5 H4 M10 11.5 H13" stroke="#000" stroke-width="1.5"/><circle cx="14" cy="14" r="1.6" fill="#fff" stroke="#000"/></svg><svg style="left:89px;top:146px" width="16" height="16" viewBox="0 0 16 16"><rect x="3.5" y="1.5" width="12" height="11" fill="#fff" stroke="#000" stroke-width="1.3"/><circle cx="9" cy="7" r="4" fill="#fff" stroke="#000"/><rect x="1.5" y="4.5" width="8" height="6" fill="#fff" stroke="#000" stroke-width="1.5"/><path d="M11 10 L14 13" stroke="#000" stroke-width="1.5"/></svg><svg style="left:89px;top:175px" width="16" height="16" viewBox="0 0 16 16"><path d="M2 5 L5 2 H14 L11 5Z" fill="#60d8e0"/><path d="M2.5 4.5 H11.5 V14.5 H2.5Z M2.5 4.5 L5.5 1.5 H14.5 L11.5 4.5 M14.5 1.5 V11.5 L11.5 14.5" fill="none" stroke="#000" stroke-width="1.2"/><path d="M5.5 1.5 V11.5 H14.5 M5.5 11.5 L2.5 14.5" fill="none" stroke="#000" stroke-width="0.7"/></svg><svg style="left:89px;top:198px" width="16" height="16" viewBox="0 0 16 16"><path d="M2 14 L5 11 H14 L11 14Z" fill="#60d8e0"/><path d="M2.5 4.5 H11.5 V14.5 H2.5Z M2.5 4.5 L5.5 1.5 H14.5 L11.5 4.5 M14.5 1.5 V11.5 L11.5 14.5" fill="none" stroke="#000" stroke-width="1.2"/><path d="M5.5 1.5 V11.5 H14.5 M5.5 11.5 L2.5 14.5" fill="none" stroke="#000" stroke-width="0.7"/></svg><svg style="left:89px;top:221px" width="16" height="16" viewBox="0 0 16 16"><path d="M2 5 L5 2 V11 L2 14Z" fill="#60d8e0"/><path d="M2.5 4.5 H11.5 V14.5 H2.5Z M2.5 4.5 L5.5 1.5 H14.5 L11.5 4.5 M14.5 1.5 V11.5 L11.5 14.5" fill="none" stroke="#000" stroke-width="1.2"/><path d="M5.5 1.5 V11.5 H14.5 M5.5 11.5 L2.5 14.5" fill="none" stroke="#000" stroke-width="0.7"/></svg><svg style="left:89px;top:244px" width="16" height="16" viewBox="0 0 16 16"><path d="M11 5 L14 2 V11 L11 14Z" fill="#60d8e0"/><path d="M2.5 4.5 H11.5 V14.5 H2.5Z M2.5 4.5 L5.5 1.5 H14.5 L11.5 4.5 M14.5 1.5 V11.5 L11.5 14.5" fill="none" stroke="#000" stroke-width="1.2"/><path d="M5.5 1.5 V11.5 H14.5 M5.5 11.5 L2.5 14.5" fill="none" stroke="#000" stroke-width="0.7"/></svg><svg style="left:89px;top:267px" width="16" height="16" viewBox="0 0 16 16"><path d="M2 5 H11 V14 H2Z" fill="#60d8e0"/><path d="M2.5 4.5 H11.5 V14.5 H2.5Z M2.5 4.5 L5.5 1.5 H14.5 L11.5 4.5 M14.5 1.5 V11.5 L11.5 14.5" fill="none" stroke="#000" stroke-width="1.2"/><path d="M5.5 1.5 V11.5 H14.5 M5.5 11.5 L2.5 14.5" fill="none" stroke="#000" stroke-width="0.7"/></svg><svg style="left:89px;top:290px" width="16" height="16" viewBox="0 0 16 16"><path d="M5 2 H14 V11 H5Z" fill="#60d8e0"/><path d="M2.5 4.5 H11.5 V14.5 H2.5Z M2.5 4.5 L5.5 1.5 H14.5 L11.5 4.5 M14.5 1.5 V11.5 L11.5 14.5" fill="none" stroke="#000" stroke-width="1.2"/><path d="M5.5 1.5 V11.5 H14.5 M5.5 11.5 L2.5 14.5" fill="none" stroke="#000" stroke-width="0.7"/></svg><svg style="left:89px;top:320px" width="16" height="16" viewBox="0 0 16 16"><path d="M3 4.5 L8 8 V15 L3 11.5Z" fill="#60d8e0"/><path d="M8 1 L13 4.5 V11.5 L8 15 L3 11.5 V4.5Z M3 4.5 L8 8 L13 4.5 M8 8 V15" fill="none" stroke="#000" stroke-width="1.1"/><path d="M8 1 V8 M3 11.5 L8 8 L13 11.5" fill="none" stroke="#000" stroke-width="0.5"/></svg><svg style="left:89px;top:343px" width="16" height="16" viewBox="0 0 16 16"><path d="M8 8 L13 4.5 V11.5 L8 15Z" fill="#60d8e0"/><path d="M8 1 L13 4.5 V11.5 L8 15 L3 11.5 V4.5Z M3 4.5 L8 8 L13 4.5 M8 8 V15" fill="none" stroke="#000" stroke-width="1.1"/><path d="M8 1 V8 M3 11.5 L8 8 L13 11.5" fill="none" stroke="#000" stroke-width="0.5"/></svg><svg style="left:89px;top:366px" width="16" height="16" viewBox="0 0 16 16"><path d="M8 1 L13 4.5 L8 8Z" fill="#60d8e0"/><path d="M8 1 L13 4.5 V11.5 L8 15 L3 11.5 V4.5Z M3 4.5 L8 8 L13 4.5 M8 8 V15" fill="none" stroke="#000" stroke-width="1.1"/><path d="M8 1 V8 M3 11.5 L8 8 L13 11.5" fill="none" stroke="#000" stroke-width="0.5"/></svg><svg style="left:89px;top:389px" width="16" height="16" viewBox="0 0 16 16"><path d="M3 4.5 L8 1 V8Z" fill="#60d8e0"/><path d="M8 1 L13 4.5 V11.5 L8 15 L3 11.5 V4.5Z M3 4.5 L8 8 L13 4.5 M8 8 V15" fill="none" stroke="#000" stroke-width="1.1"/><path d="M8 1 V8 M3 11.5 L8 8 L13 11.5" fill="none" stroke="#000" stroke-width="0.5"/></svg><svg style="left:89px;top:417px" width="16" height="16" viewBox="0 0 16 16"><path d="M3 5 H10 V9 H14 V14 H3Z" fill="#000"/><path d="M4 4 L7 1 H12 L10 4Z" fill="#000"/><path d="M10 9 L12 7 H15 L14 9" fill="#fff" stroke="#000"/><rect x="4" y="6" width="4" height="6" fill="#888"/></svg><div class="sh" style="left:59px;top:192px;width:21px"></div><div class="sh" style="left:59px;top:314px;width:21px"></div><div class="sh" style="left:59px;top:388px;width:21px"></div><div class="sh" style="left:59px;top:486px;width:21px"></div><div class="sh" style="left:59px;top:538px;width:21px"></div><div class="sh" style="left:86px;top:169px;width:21px"></div><div class="sh" style="left:86px;top:314px;width:21px"></div><div class="sh" style="left:86px;top:411px;width:21px"></div>
<div class="a" style="left:112px;top:134px;width:896px;height:485px;background:#000"></div>
<svg style="left:112px;top:134px" width="896" height="485" viewBox="112 134 896 485"><defs><clipPath id="cv"><rect x="112" y="134" width="896" height="485"/></clipPath><clipPath id="pp"><path d="M634 174 H959.5 V601 L952 609 H634Z"/></clipPath></defs><g clip-path="url(#cv)"><g fill="none" stroke="#fff" stroke-width="1.25"><circle cx="523" cy="236.5" r="91.5" vector-effect="non-scaling-stroke"/><circle cx="523" cy="236.5" r="72.5" vector-effect="non-scaling-stroke"/><circle cx="523" cy="236.7" r="14" vector-effect="non-scaling-stroke"/><path d="M505 222 Q512 212 523 213 Q537 213 543 224 Q548 236 543 248 Q537 259 523 259 Q509 259 503 250 Q497 236 505 222Z" vector-effect="non-scaling-stroke"/><ellipse cx="521.5" cy="198.2" rx="9.5" ry="9.7" vector-effect="non-scaling-stroke"/><ellipse cx="522.5" cy="274.5" rx="21.5" ry="15.5" vector-effect="non-scaling-stroke"/><path d="M452.5 218 Q458 242 470 247 Q488 252 501 240" vector-effect="non-scaling-stroke"/><path d="M455 252 Q470 266 490 262 Q505 258 512 256" vector-effect="non-scaling-stroke"/><path d="M511 218 Q508 205 512 190 Q520 176 540 172 Q545 170 544 165" vector-effect="non-scaling-stroke"/><path d="M531 213 Q528 200 531 190 Q537 180 555 181 Q566 182 572 184" vector-effect="non-scaling-stroke"/><path d="M539 219 Q545 230 550 238 Q566 255 567 270 Q568 282 570 288" vector-effect="non-scaling-stroke"/><path d="M536 255 Q550 256 556 266 Q563 280 558 295 Q552 302 542 305" vector-effect="non-scaling-stroke"/><circle cx="374" cy="155" r="9.7" vector-effect="non-scaling-stroke"/><circle cx="374" cy="318.4" r="9.7" vector-effect="non-scaling-stroke"/><path d="M370.5 164 Q371 170 371 176 V188.5 M377.5 164 Q377 170 377 176 V188.5" vector-effect="non-scaling-stroke"/><rect x="366.5" y="188.5" width="15" height="27.5" vector-effect="non-scaling-stroke"/><path d="M369.5 188.5 V216 M378.5 188.5 V216" vector-effect="non-scaling-stroke"/><rect x="366.5" y="216.5" width="15" height="39.5" vector-effect="non-scaling-stroke"/><path d="M371 256 V309 M377 256 V309" vector-effect="non-scaling-stroke"/><path d="M371 303 Q371 307 367 311 M377 303 Q377 307 381 311" vector-effect="non-scaling-stroke"/><path d="M367 262 Q362 274 367 288 M381 262 Q386 274 381 288 M367 262 L371 259 M381 262 L377 259 M367 288 L371 291 M381 288 L377 291" vector-effect="non-scaling-stroke"/></g><g fill="none" stroke="#fff" stroke-width="1.25"><circle cx="431" cy="327.3" r="9.5" vector-effect="non-scaling-stroke"/><circle cx="431" cy="490" r="9.5" vector-effect="non-scaling-stroke"/><path d="M428 336.5 V360.4 M434 336.5 V360.4" vector-effect="non-scaling-stroke"/><rect x="423.2" y="360.4" width="15.7" height="27.8" vector-effect="non-scaling-stroke"/><path d="M427.5 360.4 V388 M434.5 360.4 V388" vector-effect="non-scaling-stroke"/><rect x="423.2" y="388.2" width="15.7" height="40.6" vector-effect="non-scaling-stroke"/><path d="M428 429 V481 M434 429 V481" vector-effect="non-scaling-stroke"/><path d="M428 429.5 Q421 436 421 447 Q421 458 428 465 M434 429.5 Q441 436 441 447 Q441 458 434 465" vector-effect="non-scaling-stroke"/><path d="M439.5 396.5 H443 L447 392.2 H524.8 L530 397 H532.5 V419.6 H530 Q505 424 480 427 Q455 427 441 419.6 H439.5Z" vector-effect="non-scaling-stroke"/><path d="M443 396.5 V420" vector-effect="non-scaling-stroke"/><path d="M530 397 V419.6" vector-effect="non-scaling-stroke"/><path d="M446.6 409 Q452 401 485 400.5 Q518 401 523.8 409 Q518 417 485 417.5 Q452 417 446.6 409Z" vector-effect="non-scaling-stroke"/><path d="M446 420 Q450 430 448.5 446" vector-effect="non-scaling-stroke"/><path d="M456 427 Q455 470 454 557 Q455 580 444.6 585.3 Q440 586 436.8 583.7" vector-effect="non-scaling-stroke"/><path d="M461 428 Q460 450 461 466 L465 471 L460 477 Q460 520 461.7 576 Q460 584 452.4 588.4" vector-effect="non-scaling-stroke"/><path d="M478 426 Q469 440 469 472 Q470 510 474 530 Q485 575 509 590" vector-effect="non-scaling-stroke"/><path d="M470 427 Q466 445 466 470" vector-effect="non-scaling-stroke"/><path d="M457 440 Q453 447 457 454 M476 438 Q482 442 478 450" vector-effect="non-scaling-stroke"/><path d="M351 606 V598 Q352 592 362 591 Q372 589 378 587 Q385 583 387 578 M351 606 H384 Q390 596 397 594.6 H415 Q425 596 432 606 H523.4 V600 Q522 593 509 590" vector-effect="non-scaling-stroke"/><rect x="364.3" y="596.3" width="11.3" height="9.7" vector-effect="non-scaling-stroke"/><rect x="486.4" y="596.3" width="11.4" height="9.7" vector-effect="non-scaling-stroke"/><path d="M389 502 H428 Q433 503 433 507.5 Q433 512.9 428 512.9 H389 Q384.5 512.9 384.5 507.5 Q384.5 502 389 502Z" vector-effect="non-scaling-stroke"/><path d="M388.6 513 Q392.5 517 392.5 523 V556 Q390 570 386.5 579 M429 513 Q424.4 517 424 522 V556 Q426 570 429 577" vector-effect="non-scaling-stroke"/><path d="M395.6 585.3 Q401 575 403.4 560 V524.6 Q404 520.7 408.3 520.7 Q413 520.7 413.5 524.6 V560 Q415 575 419.7 585.3" vector-effect="non-scaling-stroke"/><path d="M402.6 548.7 L387.7 554.7 Q383.7 556.7 385.7 558.7 L402.6 555.7" vector-effect="non-scaling-stroke"/><path d="M414 548.7 L428.90000000000003 554.7 Q432.90000000000003 556.7 430.90000000000003 558.7 L414 555.7" vector-effect="non-scaling-stroke"/><path d="M402.6 560.4 L382.2 566.4 Q378.2 568.4 380.2 570.4 L402.6 567.4" vector-effect="non-scaling-stroke"/><path d="M414 560.4 L434.40000000000003 566.4 Q438.40000000000003 568.4 436.40000000000003 570.4 L414 567.4" vector-effect="non-scaling-stroke"/><path d="M402.6 569 L377.6 575 Q373.6 577 375.6 579 L402.6 574.4" vector-effect="non-scaling-stroke"/><path d="M414 569 L439.0 575 Q443.0 577 441.0 579 L414 574.4" vector-effect="non-scaling-stroke"/><path d="M429 513 Q424 520 429 527 Q436 532 445 525 Q448 521 448 510 Q448 470 448.5 446" vector-effect="non-scaling-stroke"/></g><path d="M329.5 236 H366" stroke="#3cb43c" stroke-width="1.2" stroke-dasharray="9 2 2 2"/><path d="M366 236 H523" stroke="#3cb43c" stroke-width="1.2"/><g transform="translate(287.3 320.6) scale(0.28) translate(-523 -236.5)"><g fill="none" stroke="#fff" stroke-width="1.25"><circle cx="523" cy="236.5" r="91.5" vector-effect="non-scaling-stroke"/><circle cx="523" cy="236.5" r="72.5" vector-effect="non-scaling-stroke"/><circle cx="523" cy="236.7" r="14" vector-effect="non-scaling-stroke"/><path d="M505 222 Q512 212 523 213 Q537 213 543 224 Q548 236 543 248 Q537 259 523 259 Q509 259 503 250 Q497 236 505 222Z" vector-effect="non-scaling-stroke"/><ellipse cx="521.5" cy="198.2" rx="9.5" ry="9.7" vector-effect="non-scaling-stroke"/><ellipse cx="522.5" cy="274.5" rx="21.5" ry="15.5" vector-effect="non-scaling-stroke"/><path d="M452.5 218 Q458 242 470 247 Q488 252 501 240" vector-effect="non-scaling-stroke"/><path d="M455 252 Q470 266 490 262 Q505 258 512 256" vector-effect="non-scaling-stroke"/><path d="M511 218 Q508 205 512 190 Q520 176 540 172 Q545 170 544 165" vector-effect="non-scaling-stroke"/><path d="M531 213 Q528 200 531 190 Q537 180 555 181 Q566 182 572 184" vector-effect="non-scaling-stroke"/><path d="M539 219 Q545 230 550 238 Q566 255 567 270 Q568 282 570 288" vector-effect="non-scaling-stroke"/><path d="M536 255 Q550 256 556 266 Q563 280 558 295 Q552 302 542 305" vector-effect="non-scaling-stroke"/><circle cx="374" cy="155" r="9.7" vector-effect="non-scaling-stroke"/><circle cx="374" cy="318.4" r="9.7" vector-effect="non-scaling-stroke"/><path d="M370.5 164 Q371 170 371 176 V188.5 M377.5 164 Q377 170 377 176 V188.5" vector-effect="non-scaling-stroke"/><rect x="366.5" y="188.5" width="15" height="27.5" vector-effect="non-scaling-stroke"/><path d="M369.5 188.5 V216 M378.5 188.5 V216" vector-effect="non-scaling-stroke"/><rect x="366.5" y="216.5" width="15" height="39.5" vector-effect="non-scaling-stroke"/><path d="M371 256 V309 M377 256 V309" vector-effect="non-scaling-stroke"/><path d="M371 303 Q371 307 367 311 M377 303 Q377 307 381 311" vector-effect="non-scaling-stroke"/><path d="M367 262 Q362 274 367 288 M381 262 Q386 274 381 288 M367 262 L371 259 M381 262 L377 259 M367 288 L371 291 M381 288 L377 291" vector-effect="non-scaling-stroke"/></g></g><path d="M233 321.3 H287" stroke="#30a030" stroke-dasharray="3 1.5"/><g transform="translate(251.5 440) scale(0.295 0.28) translate(-350.5 -606)"><g fill="none" stroke="#fff" stroke-width="1.25"><circle cx="431" cy="327.3" r="9.5" vector-effect="non-scaling-stroke"/><circle cx="431" cy="490" r="9.5" vector-effect="non-scaling-stroke"/><path d="M428 336.5 V360.4 M434 336.5 V360.4" vector-effect="non-scaling-stroke"/><rect x="423.2" y="360.4" width="15.7" height="27.8" vector-effect="non-scaling-stroke"/><path d="M427.5 360.4 V388 M434.5 360.4 V388" vector-effect="non-scaling-stroke"/><rect x="423.2" y="388.2" width="15.7" height="40.6" vector-effect="non-scaling-stroke"/><path d="M428 429 V481 M434 429 V481" vector-effect="non-scaling-stroke"/><path d="M428 429.5 Q421 436 421 447 Q421 458 428 465 M434 429.5 Q441 436 441 447 Q441 458 434 465" vector-effect="non-scaling-stroke"/><path d="M439.5 396.5 H443 L447 392.2 H524.8 L530 397 H532.5 V419.6 H530 Q505 424 480 427 Q455 427 441 419.6 H439.5Z" vector-effect="non-scaling-stroke"/><path d="M443 396.5 V420" vector-effect="non-scaling-stroke"/><path d="M530 397 V419.6" vector-effect="non-scaling-stroke"/><path d="M446.6 409 Q452 401 485 400.5 Q518 401 523.8 409 Q518 417 485 417.5 Q452 417 446.6 409Z" vector-effect="non-scaling-stroke"/><path d="M446 420 Q450 430 448.5 446" vector-effect="non-scaling-stroke"/><path d="M456 427 Q455 470 454 557 Q455 580 444.6 585.3 Q440 586 436.8 583.7" vector-effect="non-scaling-stroke"/><path d="M461 428 Q460 450 461 466 L465 471 L460 477 Q460 520 461.7 576 Q460 584 452.4 588.4" vector-effect="non-scaling-stroke"/><path d="M478 426 Q469 440 469 472 Q470 510 474 530 Q485 575 509 590" vector-effect="non-scaling-stroke"/><path d="M470 427 Q466 445 466 470" vector-effect="non-scaling-stroke"/><path d="M457 440 Q453 447 457 454 M476 438 Q482 442 478 450" vector-effect="non-scaling-stroke"/><path d="M351 606 V598 Q352 592 362 591 Q372 589 378 587 Q385 583 387 578 M351 606 H384 Q390 596 397 594.6 H415 Q425 596 432 606 H523.4 V600 Q522 593 509 590" vector-effect="non-scaling-stroke"/><rect x="364.3" y="596.3" width="11.3" height="9.7" vector-effect="non-scaling-stroke"/><rect x="486.4" y="596.3" width="11.4" height="9.7" vector-effect="non-scaling-stroke"/><path d="M389 502 H428 Q433 503 433 507.5 Q433 512.9 428 512.9 H389 Q384.5 512.9 384.5 507.5 Q384.5 502 389 502Z" vector-effect="non-scaling-stroke"/><path d="M388.6 513 Q392.5 517 392.5 523 V556 Q390 570 386.5 579 M429 513 Q424.4 517 424 522 V556 Q426 570 429 577" vector-effect="non-scaling-stroke"/><path d="M395.6 585.3 Q401 575 403.4 560 V524.6 Q404 520.7 408.3 520.7 Q413 520.7 413.5 524.6 V560 Q415 575 419.7 585.3" vector-effect="non-scaling-stroke"/><path d="M402.6 548.7 L387.7 554.7 Q383.7 556.7 385.7 558.7 L402.6 555.7" vector-effect="non-scaling-stroke"/><path d="M414 548.7 L428.90000000000003 554.7 Q432.90000000000003 556.7 430.90000000000003 558.7 L414 555.7" vector-effect="non-scaling-stroke"/><path d="M402.6 560.4 L382.2 566.4 Q378.2 568.4 380.2 570.4 L402.6 567.4" vector-effect="non-scaling-stroke"/><path d="M414 560.4 L434.40000000000003 566.4 Q438.40000000000003 568.4 436.40000000000003 570.4 L414 567.4" vector-effect="non-scaling-stroke"/><path d="M402.6 569 L377.6 575 Q373.6 577 375.6 579 L402.6 574.4" vector-effect="non-scaling-stroke"/><path d="M414 569 L439.0 575 Q443.0 577 441.0 579 L414 574.4" vector-effect="non-scaling-stroke"/><path d="M429 513 Q424 520 429 527 Q436 532 445 525 Q448 521 448 510 Q448 470 448.5 446" vector-effect="non-scaling-stroke"/></g></g><g fill="none" stroke="#fff" stroke-width="1"><circle cx="171" cy="406" r="25"/><circle cx="171" cy="406" r="21"/><circle cx="171" cy="406" r="17.5"/><rect x="167.5" y="402.5" width="7" height="7"/><path d="M174.9 407.0 Q181.5 409.4 185.3 416.0"/><path d="M172.0 409.9 Q173.3 416.8 169.5 423.4"/><path d="M168.2 408.8 Q162.8 413.4 155.1 413.4"/><path d="M167.1 405.0 Q160.5 402.6 156.7 396.0"/><path d="M170.0 402.1 Q168.7 395.2 172.5 388.6"/><path d="M173.8 403.2 Q179.2 398.6 186.9 398.6"/><path d="M116 401 H146 M116 411.3 H146 M116 401 V411.3 M125 401 V411.3 M136 401 V411.3 M137 405 H142 V408 H137 M130 396 V401"/><path d="M124 391 H142" stroke-width="2.5" stroke-dasharray="1.2 0.8"/><path d="M211.5 380.5 V404 M207 404 H216"/><rect x="229" y="409.2" width="10.2" height="31.8"/><circle cx="234" cy="385.6" r="8"/><path d="M234 377 V441"/><circle cx="255.6" cy="385.6" r="7"/><path d="M246 385.6 H266"/><path d="M245 374 H267" stroke-width="2.5" stroke-dasharray="1.2 0.8"/><path d="M226 377 H240" stroke-width="1.5" stroke-dasharray="1 1"/><circle cx="214.6" cy="418.4" r="5"/><path d="M203 414 H226 M203 429 L214 420 M203 433 H228" /><path d="M205 433 H226" stroke-width="2" stroke-dasharray="1.2 0.8"/><rect x="243.3" y="413.7" width="13.3" height="9.9"/></g><path d="M118 404 V411" stroke="#30c030"/><path d="M220 437 H238" stroke="#30c030"/><path d="M231 415 V430" stroke="#e040e0" stroke-width="1.5"/><path d="M237 417 V428" stroke="#40d0e0" stroke-width="1.5"/><path d="M245 417 H252 M245 421 H252" stroke="#40d0e0"/><path d="M270 414 V425" stroke="#e040e0" stroke-width="1.5"/><circle cx="272" cy="429" r="1.5" fill="#e03030"/><g fill="none" stroke="#fff" stroke-width="1"><path d="M622 269 V199.3 H615 L633.8 180 L655.5 199.3 H648.4 V269 Z M622 241.6 H690 M622 269 H690 M627 193 L634 200 L641 193 M627 214 V233 L634 226 L641 233 V213 M627 254.4 H641"/></g><path d="M634 174 H959.5 V601 L952 609 H634Z" fill="#f4f4f6"/><circle cx="740" cy="241" r="3.0" fill="#d8d8de" opacity="0.5"/><circle cx="659" cy="406" r="2.1" fill="#d8d8de" opacity="0.5"/><circle cx="655" cy="394" r="1.1" fill="#d8d8de" opacity="0.5"/><circle cx="776" cy="206" r="1.3" fill="#d8d8de" opacity="0.5"/><circle cx="773" cy="532" r="1.4" fill="#d8d8de" opacity="0.5"/><circle cx="708" cy="446" r="3.8" fill="#d8d8de" opacity="0.5"/><circle cx="822" cy="347" r="3.9" fill="#d8d8de" opacity="0.5"/><circle cx="651" cy="545" r="1.9" fill="#d8d8de" opacity="0.5"/><circle cx="682" cy="227" r="1.9" fill="#d8d8de" opacity="0.5"/><circle cx="899" cy="254" r="2.7" fill="#d8d8de" opacity="0.5"/><circle cx="842" cy="336" r="2.6" fill="#d8d8de" opacity="0.5"/><circle cx="656" cy="202" r="1.6" fill="#d8d8de" opacity="0.5"/><circle cx="855" cy="360" r="1.9" fill="#d8d8de" opacity="0.5"/><circle cx="825" cy="371" r="1.9" fill="#d8d8de" opacity="0.5"/><circle cx="892" cy="477" r="1.7" fill="#d8d8de" opacity="0.5"/><circle cx="821" cy="402" r="3.6" fill="#d8d8de" opacity="0.5"/><circle cx="871" cy="300" r="3.9" fill="#d8d8de" opacity="0.5"/><circle cx="674" cy="356" r="3.3" fill="#d8d8de" opacity="0.5"/><circle cx="685" cy="386" r="1.1" fill="#d8d8de" opacity="0.5"/><circle cx="851" cy="505" r="2.7" fill="#d8d8de" opacity="0.5"/><circle cx="918" cy="311" r="3.1" fill="#d8d8de" opacity="0.5"/><circle cx="827" cy="425" r="2.4" fill="#d8d8de" opacity="0.5"/><circle cx="906" cy="582" r="2.4" fill="#d8d8de" opacity="0.5"/><circle cx="850" cy="202" r="3.1" fill="#d8d8de" opacity="0.5"/><circle cx="844" cy="603" r="3.5" fill="#d8d8de" opacity="0.5"/><circle cx="728" cy="342" r="3.0" fill="#d8d8de" opacity="0.5"/><circle cx="643" cy="375" r="1.5" fill="#d8d8de" opacity="0.5"/><circle cx="674" cy="201" r="3.3" fill="#d8d8de" opacity="0.5"/><circle cx="678" cy="282" r="2.2" fill="#d8d8de" opacity="0.5"/><circle cx="917" cy="211" r="2.3" fill="#d8d8de" opacity="0.5"/><circle cx="813" cy="556" r="3.5" fill="#d8d8de" opacity="0.5"/><circle cx="914" cy="296" r="2.2" fill="#d8d8de" opacity="0.5"/><circle cx="752" cy="556" r="3.9" fill="#d8d8de" opacity="0.5"/><circle cx="685" cy="252" r="1.7" fill="#d8d8de" opacity="0.5"/><circle cx="711" cy="385" r="2.8" fill="#d8d8de" opacity="0.5"/><circle cx="721" cy="178" r="2.3" fill="#d8d8de" opacity="0.5"/><circle cx="755" cy="420" r="3.9" fill="#d8d8de" opacity="0.5"/><circle cx="858" cy="398" r="2.9" fill="#d8d8de" opacity="0.5"/><circle cx="854" cy="199" r="3.7" fill="#d8d8de" opacity="0.5"/><circle cx="887" cy="552" r="3.4" fill="#d8d8de" opacity="0.5"/><circle cx="762" cy="348" r="1.3" fill="#d8d8de" opacity="0.5"/><circle cx="840" cy="203" r="1.2" fill="#d8d8de" opacity="0.5"/><circle cx="703" cy="246" r="2.0" fill="#d8d8de" opacity="0.5"/><circle cx="653" cy="176" r="1.5" fill="#d8d8de" opacity="0.5"/><circle cx="669" cy="332" r="1.1" fill="#d8d8de" opacity="0.5"/><circle cx="918" cy="440" r="1.4" fill="#d8d8de" opacity="0.5"/><circle cx="717" cy="325" r="2.1" fill="#d8d8de" opacity="0.5"/><circle cx="676" cy="541" r="4.0" fill="#d8d8de" opacity="0.5"/><circle cx="786" cy="384" r="1.3" fill="#d8d8de" opacity="0.5"/><circle cx="669" cy="323" r="1.8" fill="#d8d8de" opacity="0.5"/><circle cx="903" cy="245" r="1.1" fill="#d8d8de" opacity="0.5"/><circle cx="942" cy="403" r="1.4" fill="#d8d8de" opacity="0.5"/><circle cx="811" cy="188" r="2.6" fill="#d8d8de" opacity="0.5"/><circle cx="951" cy="547" r="3.1" fill="#d8d8de" opacity="0.5"/><circle cx="720" cy="334" r="1.5" fill="#d8d8de" opacity="0.5"/><circle cx="885" cy="405" r="3.3" fill="#d8d8de" opacity="0.5"/><circle cx="742" cy="272" r="3.4" fill="#d8d8de" opacity="0.5"/><circle cx="953" cy="543" r="3.4" fill="#d8d8de" opacity="0.5"/><circle cx="900" cy="494" r="1.7" fill="#d8d8de" opacity="0.5"/><circle cx="803" cy="329" r="1.1" fill="#d8d8de" opacity="0.5"/><circle cx="645" cy="296" r="1.8" fill="#d8d8de" opacity="0.5"/><circle cx="859" cy="587" r="2.3" fill="#d8d8de" opacity="0.5"/><circle cx="938" cy="601" r="3.9" fill="#d8d8de" opacity="0.5"/><circle cx="753" cy="271" r="1.7" fill="#d8d8de" opacity="0.5"/><circle cx="699" cy="264" r="2.9" fill="#d8d8de" opacity="0.5"/><circle cx="926" cy="537" r="2.4" fill="#d8d8de" opacity="0.5"/><circle cx="846" cy="520" r="1.3" fill="#d8d8de" opacity="0.5"/><circle cx="849" cy="567" r="3.3" fill="#d8d8de" opacity="0.5"/><circle cx="878" cy="382" r="1.5" fill="#d8d8de" opacity="0.5"/><circle cx="890" cy="319" r="3.4" fill="#d8d8de" opacity="0.5"/><circle cx="949" cy="346" r="2.2" fill="#d8d8de" opacity="0.5"/><circle cx="941" cy="488" r="1.5" fill="#d8d8de" opacity="0.5"/><circle cx="677" cy="241" r="3.7" fill="#d8d8de" opacity="0.5"/><circle cx="896" cy="239" r="3.5" fill="#d8d8de" opacity="0.5"/><circle cx="952" cy="459" r="2.1" fill="#d8d8de" opacity="0.5"/><circle cx="813" cy="232" r="1.0" fill="#d8d8de" opacity="0.5"/><circle cx="949" cy="455" r="2.6" fill="#d8d8de" opacity="0.5"/><circle cx="937" cy="363" r="3.6" fill="#d8d8de" opacity="0.5"/><circle cx="902" cy="267" r="1.8" fill="#d8d8de" opacity="0.5"/><circle cx="730" cy="279" r="2.8" fill="#d8d8de" opacity="0.5"/><circle cx="720" cy="356" r="1.4" fill="#d8d8de" opacity="0.5"/><circle cx="929" cy="328" r="2.4" fill="#d8d8de" opacity="0.5"/><circle cx="824" cy="565" r="2.3" fill="#d8d8de" opacity="0.5"/><circle cx="932" cy="392" r="2.6" fill="#d8d8de" opacity="0.5"/><circle cx="805" cy="184" r="2.3" fill="#d8d8de" opacity="0.5"/><circle cx="695" cy="178" r="3.4" fill="#d8d8de" opacity="0.5"/><circle cx="691" cy="380" r="3.2" fill="#d8d8de" opacity="0.5"/><circle cx="815" cy="316" r="2.6" fill="#d8d8de" opacity="0.5"/><circle cx="815" cy="513" r="1.3" fill="#d8d8de" opacity="0.5"/><circle cx="816" cy="283" r="1.8" fill="#d8d8de" opacity="0.5"/><circle cx="885" cy="394" r="2.7" fill="#d8d8de" opacity="0.5"/><circle cx="881" cy="568" r="2.3" fill="#d8d8de" opacity="0.5"/><circle cx="833" cy="393" r="2.5" fill="#d8d8de" opacity="0.5"/><circle cx="859" cy="371" r="2.6" fill="#d8d8de" opacity="0.5"/><circle cx="790" cy="581" r="3.1" fill="#d8d8de" opacity="0.5"/><circle cx="918" cy="581" r="1.8" fill="#d8d8de" opacity="0.5"/><circle cx="816" cy="582" r="3.5" fill="#d8d8de" opacity="0.5"/><circle cx="680" cy="228" r="2.3" fill="#d8d8de" opacity="0.5"/><circle cx="659" cy="279" r="1.2" fill="#d8d8de" opacity="0.5"/><circle cx="852" cy="513" r="3.7" fill="#d8d8de" opacity="0.5"/><circle cx="686" cy="484" r="3.0" fill="#d8d8de" opacity="0.5"/><circle cx="682" cy="556" r="3.9" fill="#d8d8de" opacity="0.5"/><circle cx="707" cy="586" r="2.2" fill="#d8d8de" opacity="0.5"/><circle cx="793" cy="602" r="3.5" fill="#d8d8de" opacity="0.5"/><circle cx="688" cy="362" r="2.5" fill="#d8d8de" opacity="0.5"/><circle cx="745" cy="260" r="2.0" fill="#d8d8de" opacity="0.5"/><circle cx="869" cy="184" r="2.7" fill="#d8d8de" opacity="0.5"/><circle cx="778" cy="184" r="2.0" fill="#d8d8de" opacity="0.5"/><circle cx="837" cy="396" r="1.2" fill="#d8d8de" opacity="0.5"/><circle cx="953" cy="515" r="3.9" fill="#d8d8de" opacity="0.5"/><circle cx="670" cy="290" r="1.1" fill="#d8d8de" opacity="0.5"/><circle cx="887" cy="292" r="1.4" fill="#d8d8de" opacity="0.5"/><circle cx="772" cy="568" r="3.5" fill="#d8d8de" opacity="0.5"/><circle cx="719" cy="240" r="3.8" fill="#d8d8de" opacity="0.5"/><circle cx="820" cy="477" r="1.3" fill="#d8d8de" opacity="0.5"/><circle cx="655" cy="472" r="2.3" fill="#d8d8de" opacity="0.5"/><circle cx="659" cy="579" r="2.9" fill="#d8d8de" opacity="0.5"/><circle cx="894" cy="212" r="3.6" fill="#d8d8de" opacity="0.5"/><circle cx="657" cy="547" r="2.4" fill="#d8d8de" opacity="0.5"/><circle cx="745" cy="414" r="3.8" fill="#d8d8de" opacity="0.5"/><circle cx="722" cy="232" r="2.6" fill="#d8d8de" opacity="0.5"/><circle cx="713" cy="223" r="1.5" fill="#d8d8de" opacity="0.5"/><circle cx="652" cy="263" r="1.9" fill="#d8d8de" opacity="0.5"/><circle cx="734" cy="503" r="1.9" fill="#d8d8de" opacity="0.5"/><circle cx="797" cy="252" r="2.0" fill="#d8d8de" opacity="0.5"/><circle cx="642" cy="284" r="1.0" fill="#d8d8de" opacity="0.5"/><circle cx="872" cy="413" r="1.6" fill="#d8d8de" opacity="0.5"/><circle cx="789" cy="578" r="1.3" fill="#d8d8de" opacity="0.5"/><circle cx="900" cy="362" r="2.5" fill="#d8d8de" opacity="0.5"/><circle cx="905" cy="345" r="2.5" fill="#d8d8de" opacity="0.5"/><circle cx="857" cy="598" r="2.0" fill="#d8d8de" opacity="0.5"/><circle cx="904" cy="480" r="2.9" fill="#d8d8de" opacity="0.5"/><circle cx="766" cy="325" r="1.2" fill="#d8d8de" opacity="0.5"/><circle cx="678" cy="206" r="3.2" fill="#d8d8de" opacity="0.5"/><circle cx="718" cy="246" r="1.3" fill="#d8d8de" opacity="0.5"/><circle cx="907" cy="550" r="3.0" fill="#d8d8de" opacity="0.5"/><circle cx="727" cy="280" r="1.9" fill="#d8d8de" opacity="0.5"/><circle cx="784" cy="244" r="2.3" fill="#d8d8de" opacity="0.5"/><circle cx="721" cy="590" r="3.9" fill="#d8d8de" opacity="0.5"/><circle cx="812" cy="281" r="3.9" fill="#d8d8de" opacity="0.5"/><path d="M634 174.5 H960" stroke="#e0a8d8" stroke-width="1"/><path clip-path="url(#pp)" d="M634 224.6 H960 M634 235.7 H960 M634 246.8 H960 M634 257.9 H960 M634 269.0 H960 M634 280.1 H960 M634 291.2 H960 M634 302.3 H960 M634 313.4 H960 M634 324.5 H960 M634 335.6 H960 M634 346.7 H960 M634 357.8 H960 M634 368.9 H960 M634 380.0 H960 M634 391.1 H960 M634 402.2 H960 M634 413.3 H960 M634 424.4 H960 M634 435.5 H960 M634 446.6 H960 M634 457.7 H960 M634 468.8 H960 M634 479.9 H960 M634 491.0 H960 M634 502.1 H960 M634 513.2 H960 M634 524.3 H960 M634 535.4 H960 M634 546.5 H960 M634 557.6 H960 M634 568.7 H960 M634 579.8 H960 M634 590.9 H960 M634 602.0 H960" stroke="#b4c6ee" stroke-width="1"/><rect x="634" y="215" width="170" height="58" fill="#f4f4f6" opacity="0.75"/><path d="M673 174 V608" stroke="#e8b8c8" stroke-width="1"/><circle cx="646" cy="218.7" r="6" fill="#000"/><circle cx="646" cy="387" r="6" fill="#000"/><circle cx="643" cy="558" r="6" fill="#000"/><g clip-path="url(#pp)"><circle cx="713" cy="269.5" r="34.3" fill="none" stroke="#4e4e4e" stroke-width="10.5"/><circle cx="713" cy="269.5" r="34.3" fill="none" stroke="#8a8a8a" stroke-width="2" stroke-dasharray="1.5 4" opacity="0.7"/><circle cx="713" cy="269.5" r="31" fill="none" stroke="#777" stroke-width="1" stroke-dasharray="3 5" opacity="0.6"/><path d="M713 230 A39.5 39.5 0 1 1 712.9 230" fill="none" stroke="#1e1e1e" stroke-width="1.5" stroke-linecap="round" stroke-linejoin="round" opacity="1"/><path d="M713 240.5 A29 29 0 1 1 712.9 240.5" fill="none" stroke="#1e1e1e" stroke-width="1.3" stroke-linecap="round" stroke-linejoin="round" opacity="1"/><path d="M708 262 Q716 252 726 243 L731 246 Q722 258 718 268 Z" fill="#5a5a5a" stroke="#222" stroke-width="1"/><path d="M706 268 Q698 276 687 279 L688 285 Q700 284 710 276 Z" fill="#5a5a5a" stroke="#222" stroke-width="1"/><path d="M716 275 Q724 283 729 292 L734 289 Q728 278 720 270 Z" fill="#5a5a5a" stroke="#222" stroke-width="1"/><circle cx="716.5" cy="253.5" r="3" fill="#333"/><circle cx="712.6" cy="270.8" r="6" fill="#3a3a3a"/><circle cx="712.6" cy="270.8" r="2.3" fill="#eee"/><ellipse cx="708.7" cy="285.5" rx="8" ry="6.5" fill="#2a2a2a"/><path d="M686 241.6 L699.7 243.9 M699.7 243.9 L710 254 L690.7 273.4 M690 250 L697 258 M690 268.9 V274" fill="none" stroke="#000" stroke-width="1" stroke-linecap="round" stroke-linejoin="round" opacity="1"/><text x="700" y="320" font-size="5" fill="#444" font-family="Liberation Mono" letter-spacing="1">FLYWHEEL</text><path d="M699 185.3 H726.4" fill="none" stroke="#444" stroke-width="2" stroke-linecap="round" stroke-linejoin="round" opacity="1"/><rect x="699" y="181" width="6" height="9" fill="#2a2a2a"/><rect x="720" y="176" width="6" height="14" fill="#2a2a2a"/><path d="M706 188 V205 M702 205 H712 M715 199 H745" fill="none" stroke="#666" stroke-width="1" stroke-linecap="round" stroke-linejoin="round" opacity="1"/><path d="M680 178 L686 176 M681 186 L688 183 M683 194 L690 192 M688 200 L700 197" fill="none" stroke="#666" stroke-width="1" stroke-linecap="round" stroke-linejoin="round" opacity="1"/><rect x="752.3" y="203" width="11.4" height="36" fill="#333"/><rect x="754" y="208" width="3" height="25" fill="#777"/><path d="M737.7 225.9 H752.3" fill="none" stroke="#333" stroke-width="3" stroke-linecap="round" stroke-linejoin="round" opacity="1"/><path d="M738 222 V232" fill="none" stroke="#444" stroke-width="1.5" stroke-linecap="round" stroke-linejoin="round" opacity="1"/><path d="M755 203 Q760 196 768 202 M764 195 L770 184 L778 180" fill="none" stroke="#555" stroke-width="1.2" stroke-linecap="round" stroke-linejoin="round" opacity="1"/><path d="M750.7 250 L773.4 248.6 M769 245.5 L773.4 248.6 L769 251.5" fill="none" stroke="#333" stroke-width="1.3" stroke-linecap="round" stroke-linejoin="round" opacity="1"/><path d="M698 190 Q686 215 700 232 Q730 248 780 240 Q800 232 806 222" fill="none" stroke="#aaa" stroke-width="0.8" stroke-linecap="round" stroke-linejoin="round" opacity="1"/><path d="M789.6 237.5 A10.2 10.2 0 1 1 789.5 237.5" fill="none" stroke="#888" stroke-width="1" stroke-linecap="round" stroke-linejoin="round" opacity="1"/><path d="M787 257 V300 M792 257 V300" fill="none" stroke="#999" stroke-width="1" stroke-linecap="round" stroke-linejoin="round" opacity="1"/><path d="M815 259 Q815 238 875 236 Q935 238 935 257 Q935 277 875 278 Q815 277 815 259 Z" fill="none" stroke="#555" stroke-width="1.4" stroke-linecap="round" stroke-linejoin="round" opacity="1"/><path d="M877 252 H895 V260" fill="none" stroke="#444" stroke-width="1.1" stroke-linecap="round" stroke-linejoin="round" opacity="1"/><text x="898" y="266" font-size="11" fill="#333" font-family="Liberation Sans">8</text><circle cx="823" cy="259" r="1.8" fill="none" stroke="#444"/><circle cx="925" cy="254" r="1.8" fill="none" stroke="#444"/><path d="M880 217 Q885 206 920 202 Q942 200 942 208 Q943 218 915 222 Q890 226 882 224 Q877 222 880 217 Z" fill="none" stroke="#666" stroke-width="1" stroke-linecap="round" stroke-linejoin="round" opacity="1"/><path d="M783 185 H855" fill="none" stroke="#555" stroke-width="0.8" stroke-linecap="round" stroke-linejoin="round" opacity="1"/><path d="M905 228 L903 236 M900 233 L903 237 L906 233" fill="none" stroke="#555" stroke-width="1" stroke-linecap="round" stroke-linejoin="round" opacity="1"/><path d="M797 316 Q800 307 812 306 H874 Q887 307 893 316 V333 Q870 341 842 342 Q815 341 797 336 Z" fill="none" stroke="#333" stroke-width="1.9" stroke-linecap="round" stroke-linejoin="round" opacity="1"/><path d="M800 318 Q845 310 890 320 V332 Q845 342 800 334 Z" fill="#9a9a9a" opacity="0.35"/><path d="M808 322 Q845 313 886 322 Q846 331 808 322 Z" fill="none" stroke="#777" stroke-width="1" stroke-linecap="round" stroke-linejoin="round" opacity="1"/><path d="M893 309 V338 M899 305 V340 M906 305 V340 M899 309 H920 V336 H906 M920 320 H925 V330 H920" fill="none" stroke="#333" stroke-width="1.6" stroke-linecap="round" stroke-linejoin="round" opacity="1"/><path d="M812 306 V301 M873 306 V300 M810 300 H815 M870 300 H876" fill="none" stroke="#444" stroke-width="1.5" stroke-linecap="round" stroke-linejoin="round" opacity="1"/><path d="M756 303 Q757 298 762 298 H777 Q781 299 781 305 V312 Q779 316 762 316 Q757 315 756 309 Z M781 300 H796 V316" fill="none" stroke="#333" stroke-width="1.6" stroke-linecap="round" stroke-linejoin="round" opacity="1"/><path d="M767 316 Q770 330 768 345 V418 M774 316 Q771 330 773 345 V418" fill="none" stroke="#444" stroke-width="1.5" stroke-linecap="round" stroke-linejoin="round" opacity="1"/><path d="M786 359.5 A10 10 0 1 1 785.9 359.5 M786 391.5 A10.5 10.5 0 1 1 785.9 391.5" fill="none" stroke="#777" stroke-width="1.1" stroke-linecap="round" stroke-linejoin="round" opacity="1"/><path d="M797 336 Q806 345 808 372 Q809 400 810 436 Q812 465 814 484 Q810 498 792 500" fill="none" stroke="#333" stroke-width="1.9" stroke-linecap="round" stroke-linejoin="round" opacity="1"/><path d="M845 341 Q833 350 832 362 Q827 390 827 430 Q831 465 850 492 Q866 506 881 513" fill="none" stroke="#333" stroke-width="1.9" stroke-linecap="round" stroke-linejoin="round" opacity="1"/><path d="M818 345 Q815 400 818 460 Q820 490 822 500" fill="none" stroke="#777" stroke-width="1" stroke-linecap="round" stroke-linejoin="round" opacity="1"/><ellipse cx="817" cy="387" rx="5" ry="7" fill="#555"/><path d="M834 356 Q840 360 836 370" fill="none" stroke="#444" stroke-width="2" stroke-linecap="round" stroke-linejoin="round" opacity="1"/><path d="M840 370 V380" fill="none" stroke="#444" stroke-width="1.5" stroke-linecap="round" stroke-linejoin="round" opacity="1"/><path d="M744 417.5 H789 Q793 418 791 424 Q790 428 785 428 Q782 434 782 441 V473 M747 428 Q742 428 741.5 423 Q741 418 744 417.5 M747 428 Q751 434 752 441 Q755 460 756 473" fill="none" stroke="#333" stroke-width="1.9" stroke-linecap="round" stroke-linejoin="round" opacity="1"/><path d="M758 500 V441 Q761 434 767 434 Q774 436 774 441 V500" fill="none" stroke="#333" stroke-width="1.7" stroke-linecap="round" stroke-linejoin="round" opacity="1"/><path d="M750 417 H785" fill="none" stroke="#222" stroke-width="3" stroke-linecap="round" stroke-linejoin="round" opacity="1"/><circle cx="766" cy="446" r="2.5" fill="#333"/><circle cx="764" cy="492" r="3" fill="#333"/><path d="M746.65 471.3 H781.95 A3.049999999999983 3.049999999999983 0 0 1 781.95 477.4 H746.65 A3.049999999999983 3.049999999999983 0 0 1 746.65 471.3 Z" fill="none" stroke="#333" stroke-width="1.6" stroke-linecap="round" stroke-linejoin="round" opacity="1"/><path d="M740.05 479.4 H787.75 A3.5500000000000114 3.5500000000000114 0 0 1 787.75 486.5 H740.05 A3.5500000000000114 3.5500000000000114 0 0 1 740.05 479.4 Z" fill="none" stroke="#333" stroke-width="1.6" stroke-linecap="round" stroke-linejoin="round" opacity="1"/><path d="M731.3499999999999 488.6 H793.35 A4.049999999999983 4.049999999999983 0 0 1 793.35 496.7 H731.3499999999999 A4.049999999999983 4.049999999999983 0 0 1 731.3499999999999 488.6 Z" fill="none" stroke="#333" stroke-width="1.6" stroke-linecap="round" stroke-linejoin="round" opacity="1"/><path d="M709 522 V512 Q711 507 727 506 Q745 503 756 499 M776 499 Q790 506 805 501 M739.5 522 Q742 510 748 510 H780 Q788 511 790 522 M709 522 H881 V512 Q876 506 860 501" fill="none" stroke="#333" stroke-width="1.9" stroke-linecap="round" stroke-linejoin="round" opacity="1"/><path d="M852 510 H862 V520 H852 Z" fill="none" stroke="#333" stroke-width="1.3" stroke-linecap="round" stroke-linejoin="round" opacity="1"/><path d="M716 510 V520 M724 510 V520" fill="none" stroke="#555" stroke-width="1.2" stroke-linecap="round" stroke-linejoin="round" opacity="1"/><path d="M814 484 Q812 495 800 498 M793 428 Q806 440 814 432" fill="none" stroke="#444" stroke-width="1.6" stroke-linecap="round" stroke-linejoin="round" opacity="1"/><path d="M839 466 Q850 464 870 464 Q888 463 898 460 Q905 457 906 465 V479 Q903 485 897 481 Q885 478 870 478 Q850 478 839 478 Z" fill="none" stroke="#333" stroke-width="1.6" stroke-linecap="round" stroke-linejoin="round" opacity="1"/><path d="M872 452 V496 M868 464 H876 M868 478 H876" fill="none" stroke="#444" stroke-width="1.3" stroke-linecap="round" stroke-linejoin="round" opacity="1"/><path d="M870 440 Q866 445 870 452" fill="none" stroke="#777" stroke-width="1" stroke-linecap="round" stroke-linejoin="round" opacity="1"/><path d="M667 432 Q667 429 671 429 H736 Q739 430 739 433 V452 Q738 456 734 456 H671 Q667 455 667 452 Z" fill="none" stroke="#666" stroke-width="1" stroke-linecap="round" stroke-linejoin="round" opacity="1"/><path d="M740 548 H790 V566 H740 Z M790 557 H806 M803 554 L806 557 L803 560" fill="none" stroke="#555" stroke-width="1.1" stroke-linecap="round" stroke-linejoin="round" opacity="1"/><path d="M674 530 Q676 520 688 521 Q702 522 703 535 Q702 550 688 551 Q674 548 674 530" fill="none" stroke="#777" stroke-width="1" stroke-linecap="round" stroke-linejoin="round" opacity="1"/><path d="M648 503 Q660 480 690 470 Q715 462 728 452" fill="none" stroke="#666" stroke-width="1.8" stroke-linecap="round" stroke-linejoin="round" opacity="1"/><path d="M646 500 V508 M644 502 H648 M641 508 H650 V520 H641 Z M638 520 Q636 526 642 528 H660" fill="none" stroke="#777" stroke-width="1.1" stroke-linecap="round" stroke-linejoin="round" opacity="1"/><path d="M684 552 H711 Q715 553 714.5 556 Q714 559 709 559 Q706 575 712 606 M686 559 Q682 558 682 555.5 Q682 552 684 552 M686 559 Q690 580 684 606" fill="none" stroke="#333" stroke-width="1.7" stroke-linecap="round" stroke-linejoin="round" opacity="1"/><path d="M694 606 V570 Q696 563 699 563 Q702 564 702 570 V606" fill="none" stroke="#333" stroke-width="1.5" stroke-linecap="round" stroke-linejoin="round" opacity="1"/><path d="M693 578 L676 582 Q672 585 676 587 L693 584 M703 578 L718 582 Q722 585 718 587 L703 584" fill="none" stroke="#555" stroke-width="1.5" stroke-linecap="round" stroke-linejoin="round" opacity="1"/><path d="M693 586 L674 590 Q670 593 674 595 L693 592 M703 586 L720 590 Q724 593 720 595 L703 592" fill="none" stroke="#555" stroke-width="1.5" stroke-linecap="round" stroke-linejoin="round" opacity="1"/><path d="M693 594 L672 598 Q668 601 672 603 L693 600 M703 594 L722 598 Q726 601 722 603 L703 600" fill="none" stroke="#555" stroke-width="1.5" stroke-linecap="round" stroke-linejoin="round" opacity="1"/><circle cx="698" cy="604" r="2.5" fill="#333"/><circle cx="698" cy="574" r="1.8" fill="#333"/><path d="M826 540 V582 M834 540 V565 Q838 557 850 556 H858 Q866 560 868 570 Q866 578 860 578 H846 V588 M816 582 H844" fill="none" stroke="#777" stroke-width="1.2" stroke-linecap="round" stroke-linejoin="round" opacity="1"/><path d="M857 550 Q870 548 880 552" fill="none" stroke="#888" stroke-width="1" stroke-linecap="round" stroke-linejoin="round" opacity="1"/><path d="M640 292 H650 V307 L646 312 V322 M642 322 Q636 330 642 336 V340 Q636 350 640 358 Q645 362 650 356 V340 Q652 332 648 325 M634 325 H665" fill="none" stroke="#8a8aa0" stroke-width="1.2" stroke-linecap="round" stroke-linejoin="round" opacity="1"/><path d="M704 340 A35 35 0 1 1 703.9 340 M690 360 Q700 350 715 360 Q720 380 705 392" fill="none" stroke="#b8b8c0" stroke-width="0.8" stroke-linecap="round" stroke-linejoin="round" opacity="1"/><ellipse cx="693" cy="405" rx="3" ry="5" fill="#444"/><path d="M870 395 Q880 388 893 396 Q896 408 880 412 Q858 413 851 405 Q852 396 870 395" fill="none" stroke="#666" stroke-width="1" stroke-linecap="round" stroke-linejoin="round" opacity="1"/><path d="M875 380 V410 M868 396 H892" fill="none" stroke="#555" stroke-width="1.2" stroke-linecap="round" stroke-linejoin="round" opacity="1"/><path d="M940 410 H950 M945 410 V420 M938 420 H952 V432 H938 Z" fill="none" stroke="#666" stroke-width="1" stroke-linecap="round" stroke-linejoin="round" opacity="1"/><path d="M880 470 V590 M920 400 V600" fill="none" stroke="#bbb" stroke-width="0.8" stroke-linecap="round" stroke-linejoin="round" opacity="1"/><text x="0" y="0" font-size="6.0" fill="#444" font-family="Liberation Sans" letter-spacing="0.5" transform="translate(783 183) rotate(0) scale(1 1.1)">BUT TYPE B  ENGINE</text><text x="0" y="0" font-size="5.5" fill="#444" font-family="Liberation Sans" letter-spacing="0.5" transform="translate(776 191) rotate(0) scale(1 1.1)">is 8 to NOT have same design</text><text x="0" y="0" font-size="5.0" fill="#444" font-family="Liberation Sans" letter-spacing="0.5" transform="translate(770 200) rotate(-2) scale(1 1.1)">of casting to be said to cause as much stress</text><text x="0" y="0" font-size="5.3" fill="#444" font-family="Liberation Sans" letter-spacing="0.5" transform="translate(775 207) rotate(-3) scale(1 1.1)">& any shot in the cavity for the</text><text x="0" y="0" font-size="5.3" fill="#444" font-family="Liberation Sans" letter-spacing="0.5" transform="translate(774 213) rotate(-3) scale(1 1.1)">but with that fixed up</text><text x="0" y="0" font-size="5.5" fill="#444" font-family="Liberation Sans" letter-spacing="0.5" transform="translate(785 220) rotate(-3) scale(1 1.1)">or (ties Exhibit casting)</text><text x="0" y="0" font-size="6.0" fill="#444" font-family="Liberation Sans" letter-spacing="0.5" transform="translate(900 186) rotate(0) scale(1 1.1)">8-17-06</text><text x="0" y="0" font-size="5.4" fill="#444" font-family="Liberation Sans" letter-spacing="0.5" transform="translate(888 217) rotate(-8) scale(1 1.1)">say take the</text><text x="0" y="0" font-size="5.4" fill="#444" font-family="Liberation Sans" letter-spacing="0.5" transform="translate(885 226) rotate(-8) scale(1 1.1)">custom tolerance</text><text x="0" y="0" font-size="5.5" fill="#444" font-family="Liberation Sans" letter-spacing="0.5" transform="translate(830 248) rotate(-8) scale(1 1.1)">Refinement</text><text x="0" y="0" font-size="5.5" fill="#444" font-family="Liberation Sans" letter-spacing="0.5" transform="translate(840 256) rotate(-10) scale(1 1.1)">to be done to</text><text x="0" y="0" font-size="6.0" fill="#444" font-family="Liberation Sans" letter-spacing="0.5" transform="translate(822 269) rotate(0) scale(1 1.1)">ENGINE  NO</text><text x="0" y="0" font-size="5.3" fill="#444" font-family="Liberation Sans" letter-spacing="0.5" transform="translate(910 272) rotate(0) scale(1 1.1)">ENGINE</text><text x="0" y="0" font-size="5.4" fill="#444" font-family="Liberation Sans" letter-spacing="0.5" transform="translate(826 278) rotate(8) scale(1 1.1)">numbers</text><text x="0" y="0" font-size="5.4" fill="#444" font-family="Liberation Sans" letter-spacing="0.5" transform="translate(750 282) rotate(0) scale(1 1.1)">Ch Kw</text><text x="0" y="0" font-size="5.4" fill="#444" font-family="Liberation Sans" letter-spacing="0.5" transform="translate(800 293) rotate(-8) scale(1 1.1)">Engine Rearing</text><text x="0" y="0" font-size="5.4" fill="#444" font-family="Liberation Sans" letter-spacing="0.5" transform="translate(858 292) rotate(-10) scale(1 1.1)">the ship is in the</text><text x="0" y="0" font-size="5.4" fill="#444" font-family="Liberation Sans" letter-spacing="0.5" transform="translate(900 290) rotate(-12) scale(1 1.1)">center of</text><text x="0" y="0" font-size="5.4" fill="#444" font-family="Liberation Sans" letter-spacing="0.5" transform="translate(920 298) rotate(-15) scale(1 1.1)">this work</text><text x="0" y="0" font-size="5.3" fill="#444" font-family="Liberation Sans" letter-spacing="0.5" transform="translate(855 358) rotate(0) scale(1 1.1)">1/2 diff</text><text x="0" y="0" font-size="5.3" fill="#444" font-family="Liberation Sans" letter-spacing="0.5" transform="translate(852 366) rotate(0) scale(1 1.1)">width to</text><text x="0" y="0" font-size="5.3" fill="#444" font-family="Liberation Sans" letter-spacing="0.5" transform="translate(852 373) rotate(0) scale(1 1.1)">get 2 Oval</text><text x="0" y="0" font-size="5.3" fill="#444" font-family="Liberation Sans" letter-spacing="0.5" transform="translate(848 386) rotate(0) scale(1 1.1)">center</text><text x="0" y="0" font-size="5.3" fill="#444" font-family="Liberation Sans" letter-spacing="0.5" transform="translate(846 393) rotate(0) scale(1 1.1)">move in by</text><text x="0" y="0" font-size="5.3" fill="#444" font-family="Liberation Sans" letter-spacing="0.5" transform="translate(850 400) rotate(0) scale(1 1.1)">Bearing</text><text x="0" y="0" font-size="5.3" fill="#444" font-family="Liberation Sans" letter-spacing="0.5" transform="translate(922 388) rotate(0) scale(1 1.1)">NOT SEE</text><text x="0" y="0" font-size="5.3" fill="#444" font-family="Liberation Sans" letter-spacing="0.5" transform="translate(925 395) rotate(0) scale(1 1.1)">a pin on</text><text x="0" y="0" font-size="5.3" fill="#444" font-family="Liberation Sans" letter-spacing="0.5" transform="translate(922 402) rotate(0) scale(1 1.1)">other side of</text><text x="0" y="0" font-size="5.3" fill="#444" font-family="Liberation Sans" letter-spacing="0.5" transform="translate(924 409) rotate(0) scale(1 1.1)">hell  base</text><text x="0" y="0" font-size="5.3" fill="#444" font-family="Liberation Sans" letter-spacing="0.5" transform="translate(922 417) rotate(0) scale(1 1.1)">support of it</text><text x="0" y="0" font-size="5.3" fill="#444" font-family="Liberation Sans" letter-spacing="0.5" transform="translate(925 424) rotate(0) scale(1 1.1)">this ties</text><text x="0" y="0" font-size="5.3" fill="#444" font-family="Liberation Sans" letter-spacing="0.5" transform="translate(922 431) rotate(0) scale(1 1.1)">fit this</text><text x="0" y="0" font-size="5.5" fill="#444" font-family="Liberation Sans" letter-spacing="0.5" transform="translate(680 437) rotate(0) scale(1 1.1)">Small  Shaft  that the</text><text x="0" y="0" font-size="5.5" fill="#444" font-family="Liberation Sans" letter-spacing="0.5" transform="translate(680 444) rotate(0) scale(1 1.1)">of a  diameter  of</text><text x="0" y="0" font-size="5.5" fill="#444" font-family="Liberation Sans" letter-spacing="0.5" transform="translate(680 451) rotate(0) scale(1 1.1)">and fit  one on ball</text><text x="0" y="0" font-size="5.3" fill="#444" font-family="Liberation Sans" letter-spacing="0.5" transform="translate(694 428) rotate(0) scale(1 1.1)">Longer  to</text><text x="0" y="0" font-size="5.3" fill="#444" font-family="Liberation Sans" letter-spacing="0.5" transform="translate(716 463) rotate(0) scale(1 1.1)">Fix  it</text><text x="0" y="0" font-size="5.3" fill="#444" font-family="Liberation Sans" letter-spacing="0.5" transform="translate(720 472) rotate(0) scale(1 1.1)">up  Flange</text><text x="0" y="0" font-size="5.3" fill="#444" font-family="Liberation Sans" letter-spacing="0.5" transform="translate(800 455) rotate(0) scale(1 1.1)">full</text><text x="0" y="0" font-size="5.3" fill="#444" font-family="Liberation Sans" letter-spacing="0.5" transform="translate(798 462) rotate(0) scale(1 1.1)">under</text><text x="0" y="0" font-size="5.3" fill="#444" font-family="Liberation Sans" letter-spacing="0.5" transform="translate(690 490) rotate(0) scale(1 1.1)">Fix  body</text><text x="0" y="0" font-size="5.0" fill="#444" font-family="Liberation Sans" letter-spacing="0.5" transform="translate(742 555) rotate(0) scale(1 1.1)">CASTING STANDARD</text><text x="0" y="0" font-size="5.0" fill="#444" font-family="Liberation Sans" letter-spacing="0.5" transform="translate(743 562) rotate(0) scale(1 1.1)">FROM ROLLERS</text><text x="0" y="0" font-size="5.3" fill="#444" font-family="Liberation Sans" letter-spacing="0.5" transform="translate(748 575) rotate(0) scale(1 1.1)">BOLTS</text><text x="0" y="0" font-size="5.0" fill="#444" font-family="Liberation Sans" letter-spacing="0.5" transform="translate(650 547) rotate(0) scale(1 1.1)">USE THE</text><text x="0" y="0" font-size="5.3" fill="#444" font-family="Liberation Sans" letter-spacing="0.5" transform="translate(648 575) rotate(0) scale(1 1.1)">this  Mt</text><text x="0" y="0" font-size="5.3" fill="#444" font-family="Liberation Sans" letter-spacing="0.5" transform="translate(648 587) rotate(0) scale(1 1.1)">RODS  fit</text><text x="0" y="0" font-size="5.3" fill="#444" font-family="Liberation Sans" letter-spacing="0.5" transform="translate(650 596) rotate(0) scale(1 1.1)">welt</text><text x="0" y="0" font-size="5.5" fill="#444" font-family="Liberation Sans" letter-spacing="0.5" transform="translate(860 527) rotate(0) scale(1 1.1)">Extend  to  3 inch  ball</text><text x="0" y="0" font-size="5.3" fill="#444" font-family="Liberation Sans" letter-spacing="0.5" transform="translate(677 530) rotate(-10) scale(1 1.1)">Mammoth</text><text x="0" y="0" font-size="5.3" fill="#444" font-family="Liberation Sans" letter-spacing="0.5" transform="translate(682 539) rotate(0) scale(1 1.1)">with</text><text x="0" y="0" font-size="5.5" fill="#444" font-family="Liberation Sans" letter-spacing="0.5" transform="translate(679 547) rotate(-5) scale(1 1.1)">Flange</text><text x="0" y="0" font-size="5.3" fill="#444" font-family="Liberation Sans" letter-spacing="0.5" transform="translate(760 592) rotate(0) scale(1 1.1)">Trace  with  fill  as this</text><text x="0" y="0" font-size="5.3" fill="#444" font-family="Liberation Sans" letter-spacing="0.5" transform="translate(778 600) rotate(0) scale(1 1.1)">Tell  of  side  of  this</text><text x="0" y="0" font-size="5.3" fill="#444" font-family="Liberation Sans" letter-spacing="0.5" transform="translate(830 594) rotate(-3) scale(1 1.1)">This  will  fit  this</text><text x="0" y="0" font-size="5.3" fill="#444" font-family="Liberation Sans" letter-spacing="0.5" transform="translate(848 603) rotate(-3) scale(1 1.1)">a new  socket  (long  of  metal)</text><text x="0" y="0" font-size="5.3" fill="#444" font-family="Liberation Sans" letter-spacing="0.5" transform="translate(925 595) rotate(-5) scale(1 1.1)">socket</text><text x="0" y="0" font-size="5.3" fill="#444" font-family="Liberation Sans" letter-spacing="0.5" transform="translate(740 600) rotate(0) scale(1 1.1)">set into</text><text x="0" y="0" font-size="5.3" fill="#444" font-family="Liberation Sans" letter-spacing="0.5" transform="translate(700 600) rotate(0) scale(1 1.1)">lower</text></g><g fill="none" stroke="#000" stroke-width="1.2" clip-path="url(#pp)"><path d="M622 269 V199.3 H615 L633.8 180 L655.5 199.3 H648.4 V269 Z M622 241.6 H690 M622 269 H690 M627 193 L634 200 L641 193 M627 214 V233 L634 226 L641 233 V213 M627 254.4 H641"/></g></g></svg>
<div class="a" style="left:1008px;top:134px;width:16px;height:485px;background:linear-gradient(90deg,#f3f1e6,#fefefb)"></div>
<div class="a" style="left:1008px;top:135px;width:16px;height:17px;border:1px solid #fff;border-radius:2px;background:linear-gradient(135deg,#dce8fc,#c2d4f6 60%,#b4c8f2);box-shadow:inset -1px -1px 0 #a8bce8"></div><svg style="left:1008px;top:135px" width="16" height="16" viewBox="0 0 16 16"><path d="M4 10 L8 6 L12 10" stroke="#4d6185" stroke-width="2" fill="none"/></svg><div class="a" style="left:1008px;top:368px;width:16px;height:17px;border:1px solid #fff;border-radius:2px;background:linear-gradient(135deg,#dce8fc,#c2d4f6 60%,#b4c8f2);box-shadow:inset -1px -1px 0 #a8bce8"></div><svg style="left:1008px;top:368px" width="16" height="16" viewBox="0 0 16 16"><path d="M5 5 H11 M5 7.5 H11 M5 10 H11" stroke="#a0b4e0" stroke-width="1"/></svg><div class="a" style="left:1008px;top:601px;width:16px;height:17px;border:1px solid #fff;border-radius:2px;background:linear-gradient(135deg,#dce8fc,#c2d4f6 60%,#b4c8f2);box-shadow:inset -1px -1px 0 #a8bce8"></div><svg style="left:1008px;top:601px" width="16" height="16" viewBox="0 0 16 16"><path d="M4 6 L8 10 L12 6" stroke="#4d6185" stroke-width="2" fill="none"/></svg><div class="a" style="left:982px;top:149px;width:23px;height:1px;background:#fff"></div><div class="a" style="left:1004px;top:146px;width:4px;height:7px;border:1px solid #fff;border-right:none"></div>
<div class="a" style="left:112px;top:619px;width:590px;height:17px;background:#ece9d8"></div><div class="a" style="left:113px;top:620px;width:18px;height:15px;border:1px solid;border-color:#fff #9d9a8c #9d9a8c #fff;background:#ece9d8"></div><svg style="left:114px;top:620px" width="16" height="15" viewBox="0 0 16 15"><path d="M4 3 V12" stroke="#000" stroke-width="1.5"/><path d="M12 3 L6 7.5 L12 12Z" fill="#000"/></svg><div class="a" style="left:131px;top:620px;width:18px;height:15px;border:1px solid;border-color:#fff #9d9a8c #9d9a8c #fff;background:#ece9d8"></div><svg style="left:132px;top:620px" width="16" height="15" viewBox="0 0 16 15"><path d="M11 3 L5 7.5 L11 12Z" fill="#000"/></svg><div class="a" style="left:149px;top:620px;width:18px;height:15px;border:1px solid;border-color:#fff #9d9a8c #9d9a8c #fff;background:#ece9d8"></div><svg style="left:150px;top:620px" width="16" height="15" viewBox="0 0 16 15"><path d="M6 3 L12 7.5 L6 12Z" fill="#000"/></svg><div class="a" style="left:167px;top:620px;width:18px;height:15px;border:1px solid;border-color:#fff #9d9a8c #9d9a8c #fff;background:#ece9d8"></div><svg style="left:168px;top:620px" width="16" height="15" viewBox="0 0 16 15"><path d="M12 3 V12" stroke="#000" stroke-width="1.5"/><path d="M4 3 L10 7.5 L4 12Z" fill="#000"/></svg><svg style="left:180px;top:619px" width="190" height="18" viewBox="180 619 190 18"><path d="M299.5 620.5 H356 L352 634.5 H295.5Z" fill="#ece9d8" stroke="#000" stroke-width="1"/><path d="M241 620.5 H297.5 L293.5 634.5 H237.5Z" fill="#ece9d8" stroke="#000" stroke-width="1"/><path d="M188 619.5 H239 L235.7 634.5 H193.5Z" fill="#000" stroke="#000" stroke-width="1"/></svg><div class="a" style="left:197px;top:620px;font-weight:bold;color:#fff;font-size:11px;line-height:13px">Model</div><div class="a" style="left:248px;top:620px;font-size:11px;line-height:13px;transform:scaleX(0.92);transform-origin:0 0">Layout1</div><div class="a" style="left:305px;top:620px;font-size:11px;line-height:13px;transform:scaleX(0.92);transform-origin:0 0">Layout2</div><div class="a" style="left:702px;top:619px;width:306px;height:17px;background:repeating-linear-gradient(45deg,#eeebdd 0 1px,#f6f5ee 1px 2px)"></div><div class="a" style="left:705px;top:620px;width:21px;height:16px;border:1px solid;border-color:#fff #716f64 #716f64 #fff;background:#ece9d8"></div><svg style="left:707px;top:620px" width="16" height="16" viewBox="0 0 16 16"><path d="M10 4 L6 8 L10 12Z" fill="#000"/></svg><div class="a" style="left:975px;top:620px;width:15px;height:16px;border:1px solid;border-color:#fff #716f64 #716f64 #fff;background:#ece9d8"></div><div class="a" style="left:990px;top:620px;width:17px;height:16px;border:1px solid;border-color:#fff #716f64 #716f64 #fff;background:#ece9d8"></div><svg style="left:991px;top:620px" width="16" height="16" viewBox="0 0 16 16"><path d="M6 4 L10 8 L6 12Z" fill="#000"/></svg>
<div class="a" style="left:0;top:637px;width:1024px;height:1px;background:#000"></div><div class="a" style="left:0;top:638px;width:1024px;height:1px;background:#fff"></div><div class="a" style="left:0;top:642px;width:1024px;height:1px;background:#000"></div><div class="a" style="left:0;top:643px;width:1024px;height:1px;background:#fff"></div><div class="a" style="left:6px;top:646px;width:1002px;height:70px;background:#fff;border-top:1px solid #000;border-left:1px solid #000;box-shadow:-1px -1px 0 #808080"></div><div class="a" style="left:7px;top:699px;width:1001px;height:1px;background:#aca899"></div><div id="cmd" class="a" style="left:8px;top:648px">Loading Modeler DLLs.<br>Regenerating model.<br>AutoCAD menu utilities loaded.<br>AutoCAD Express Tools Menu loaded.</div><div class="a" style="left:8px;top:702px;font-family:'Liberation Mono',monospace;font-size:13.3px;line-height:13px">Command:</div><div class="a" style="left:1007px;top:646px;width:17px;height:70px;background:#f4f3ee"></div><div class="a" style="left:1008px;top:648px;width:14px;height:15px;border:1px solid #fff;border-radius:2px;background:linear-gradient(135deg,#dce8fc,#c2d4f6 60%,#b4c8f2);box-shadow:inset -1px -1px 0 #a8bce8"></div><svg style="left:1007px;top:647px" width="16" height="16" viewBox="0 0 16 16"><path d="M4 10 L8 6 L12 10" stroke="#4d6185" stroke-width="2" fill="none"/></svg><div class="a" style="left:1008px;top:666px;width:14px;height:15px;border:1px solid #fff;border-radius:2px;background:linear-gradient(135deg,#dce8fc,#c2d4f6 60%,#b4c8f2);box-shadow:inset -1px -1px 0 #a8bce8"></div><svg style="left:1007px;top:665px" width="16" height="16" viewBox="0 0 16 16"><path d="M5 5 H11 M5 7.5 H11 M5 10 H11" stroke="#a0b4e0" stroke-width="1"/></svg><div class="a" style="left:1008px;top:683px;width:14px;height:15px;border:1px solid #fff;border-radius:2px;background:linear-gradient(135deg,#dce8fc,#c2d4f6 60%,#b4c8f2);box-shadow:inset -1px -1px 0 #a8bce8"></div><svg style="left:1007px;top:682px" width="16" height="16" viewBox="0 0 16 16"><path d="M4 6 L8 10 L12 6" stroke="#4d6185" stroke-width="2" fill="none"/></svg><div class="a" style="left:940px;top:699px;width:65px;height:15px;background:repeating-linear-gradient(45deg,#eeebdd 0 1px,#f6f5ee 1px 2px)"></div><div class="a" style="left:940px;top:699px;width:16px;height:15px;border:1px solid;border-color:#fff #716f64 #716f64 #fff;background:#ece9d8"></div><div class="a" style="left:956px;top:699px;width:16px;height:15px;border:1px solid;border-color:#fff #716f64 #716f64 #fff;background:#ece9d8"></div><div class="a" style="left:988px;top:699px;width:16px;height:15px;border:1px solid;border-color:#fff #716f64 #716f64 #fff;background:#ece9d8"></div><svg style="left:940px;top:699px" width="16" height="16" viewBox="0 0 16 16"><path d="M9 5 L6 8 L9 11Z" fill="#000"/></svg><svg style="left:988px;top:699px" width="16" height="16" viewBox="0 0 16 16"><path d="M7 5 L10 8 L7 11Z" fill="#000"/></svg>
<div class="a" style="left:0;top:716px;width:1024px;height:23px;background:#ece9d8"></div><div class="a" style="left:0;top:718px;width:1024px;height:1px;background:#fff"></div><div class="a sk" style="left:13px;top:723px;width:234px;height:14px"></div><div class="a" style="left:16px;top:723px;font-size:12.5px;line-height:14px;transform:scaleX(0.88);transform-origin:0 0;white-space:nowrap">41.8340, 11.8168 , 0.0000</div><div class="a" style="left:250px;top:723px;width:37px;height:15px;border-right:1px solid #aca899;"></div><div class="a" style="left:250px;top:723px;width:37px;height:15px;font-size:12.5px;line-height:15px;text-align:center;white-space:nowrap"><span style="display:inline-block;transform:scaleX(0.84)">SNAP</span></div><div class="a" style="left:287px;top:723px;width:32px;height:15px;border-right:1px solid #aca899;"></div><div class="a" style="left:287px;top:723px;width:32px;height:15px;font-size:12.5px;line-height:15px;text-align:center;white-space:nowrap"><span style="display:inline-block;transform:scaleX(0.84)">GRID</span></div><div class="a" style="left:321px;top:723px;width:43px;height:15px;border:1px solid;border-color:#404040 #fff #fff #404040;"></div><div class="a" style="left:321px;top:723px;width:43px;height:15px;font-size:12.5px;line-height:15px;text-align:center;white-space:nowrap"><span style="display:inline-block;transform:scaleX(0.84)">ORTHO</span></div><div class="a" style="left:365px;top:723px;width:41px;height:15px;border-right:1px solid #aca899;"></div><div class="a" style="left:365px;top:723px;width:41px;height:15px;font-size:12.5px;line-height:15px;text-align:center;white-space:nowrap"><span style="display:inline-block;transform:scaleX(0.84)">POLAR</span></div><div class="a" style="left:407px;top:723px;width:43px;height:15px;border:1px solid;border-color:#404040 #fff #fff #404040;"></div><div class="a" style="left:407px;top:723px;width:43px;height:15px;font-size:12.5px;line-height:15px;text-align:center;white-space:nowrap"><span style="display:inline-block;transform:scaleX(0.84)">OSNAP</span></div><div class="a" style="left:451px;top:723px;width:47px;height:15px;border-right:1px solid #aca899;"></div><div class="a" style="left:451px;top:723px;width:47px;height:15px;font-size:12.5px;line-height:15px;text-align:center;white-space:nowrap"><span style="display:inline-block;transform:scaleX(0.84)">OTRACK</span></div><div class="a" style="left:499px;top:723px;width:31px;height:15px;border-right:1px solid #aca899;"></div><div class="a" style="left:499px;top:723px;width:31px;height:15px;font-size:12.5px;line-height:15px;text-align:center;white-space:nowrap"><span style="display:inline-block;transform:scaleX(0.84)">LWT</span></div><div class="a" style="left:531px;top:723px;width:43px;height:15px;border:1px solid;border-color:#404040 #fff #fff #404040;"></div><div class="a" style="left:531px;top:723px;width:43px;height:15px;font-size:12.5px;line-height:15px;text-align:center;white-space:nowrap"><span style="display:inline-block;transform:scaleX(0.84)">MODEL</span></div><div class="a" style="left:0;top:738px;width:1024px;height:1px;background:linear-gradient(90deg,#3a8a3a 0,#3a8a3a 96px,#2a5ad8 98px,#2a5ad8)"></div>
</body></html>
